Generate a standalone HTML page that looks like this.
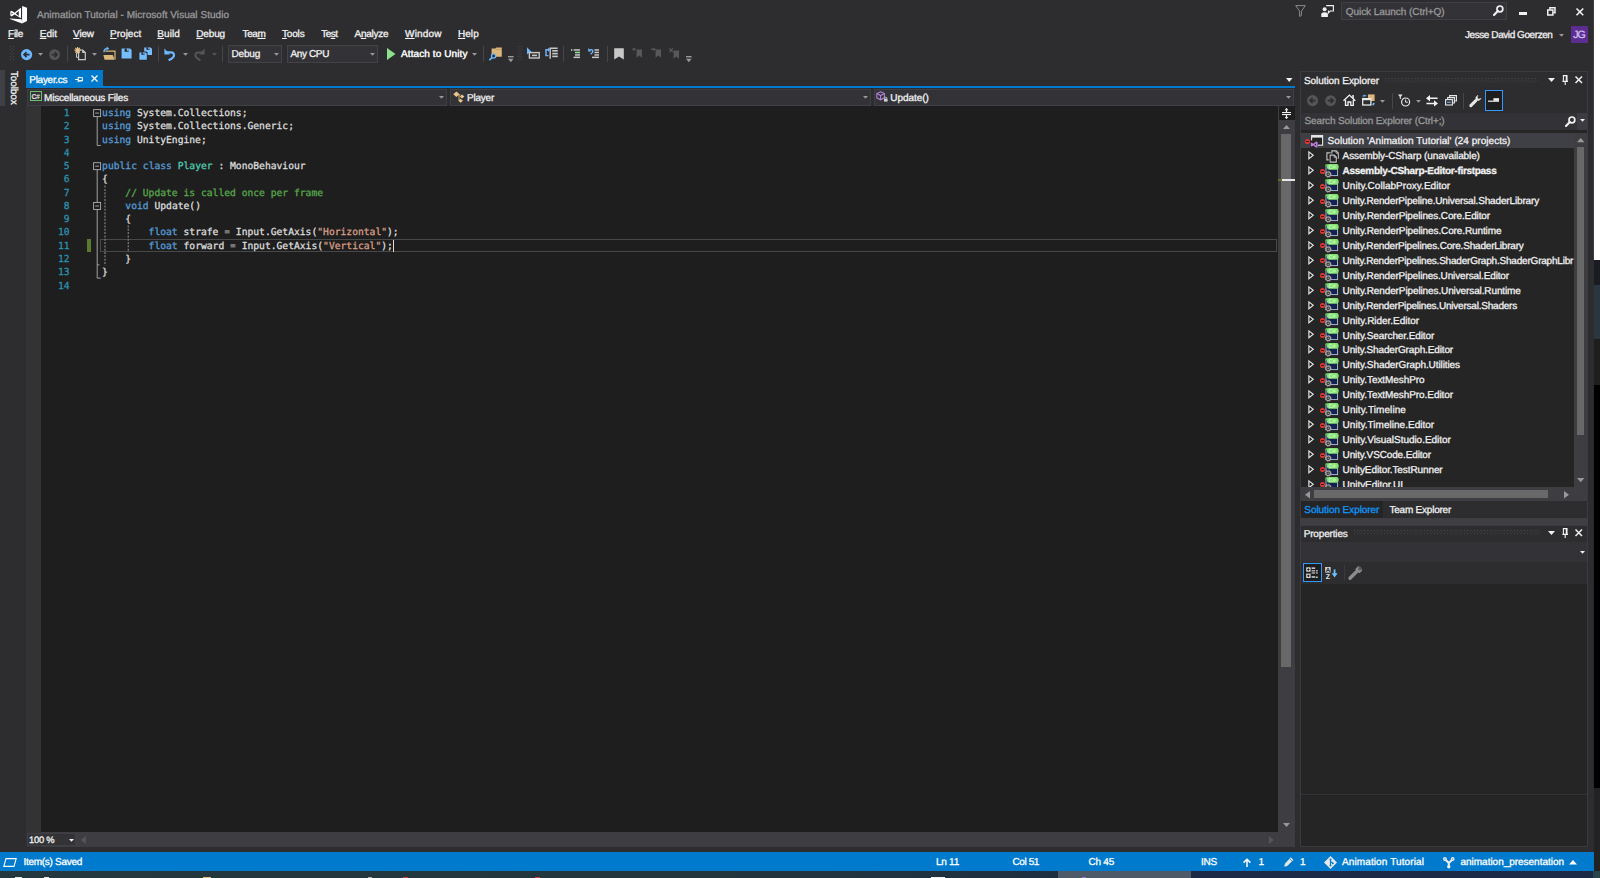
<!DOCTYPE html>
<html lang="en"><head><meta charset="utf-8"><title>Animation Tutorial - Microsoft Visual Studio</title>
<style>
html,body{margin:0;padding:0;background:#2d2d30;overflow:hidden}
body{width:1600px;height:878px;position:relative;font-family:"Liberation Sans",sans-serif;font-size:10px;color:#f1f1f1;text-rendering:geometricPrecision;-webkit-text-stroke:0.3px}
.a{position:absolute}
.t{position:absolute;white-space:pre;line-height:14px}
.c{position:absolute;white-space:pre;font-family:"DejaVu Sans Mono","Liberation Mono",monospace}
svg{position:absolute;overflow:visible}
u{text-decoration:underline;text-underline-offset:1px;text-decoration-thickness:1px}
.o{color:#b4b4b4;-webkit-text-stroke:0}.k{color:#569cd6}.ty{color:#4ec9b0}.s{color:#d69d85}.cm{color:#57a64a}

</style></head>
<body>
<div class="a" style="left:1593px;top:0px;width:7px;height:260px;background:#ffffff;"></div>
<div class="a" style="left:1593px;top:260px;width:7px;height:25px;background:#191c20;"></div>
<div class="a" style="left:1593px;top:285px;width:7px;height:54px;background:#2b3640;"></div>
<div class="a" style="left:1593px;top:339px;width:7px;height:46px;background:#1e1e1e;"></div>
<div class="a" style="left:1593px;top:385px;width:7px;height:402.5px;background:#000000;"></div>
<div class="a" style="left:1593px;top:787.5px;width:7px;height:85px;background:#222222;"></div>
<div class="a" style="left:1592.5px;top:0px;width:1.5px;height:872px;background:linear-gradient(90deg,#2d2d30,#2d2d30 40%,rgba(45,45,48,0.5));"></div>
<div class="a" style="left:0px;top:871.4px;width:1600px;height:6.6px;background:linear-gradient(90deg,#24383f 0%,#23363e 45%,#1f3040 62%,#1c2a47 76%,#1c2a47 100%);"></div>
<div class="a" style="left:1058px;top:871.4px;width:133px;height:6.6px;background:#4e5a68;"></div>
<div class="a" style="left:1593px;top:871.4px;width:7px;height:6.6px;background:#2a454a;"></div>
<div class="a" style="left:15px;top:876.6px;width:7px;height:1.4px;background:#e8e8e8;"></div>
<div class="a" style="left:44px;top:876.6px;width:4.5px;height:1.4px;background:#e8e8e8;"></div>
<div class="a" style="left:203px;top:876.6px;width:8px;height:1.4px;background:#e9c46a;"></div>
<div class="a" style="left:368px;top:876.6px;width:4px;height:1.4px;background:#b0b0b0;"></div>
<div class="a" style="left:403px;top:876.6px;width:5px;height:1.4px;background:#d04040;"></div>
<div class="a" style="left:535px;top:876.6px;width:5px;height:1.4px;background:#d04040;"></div>
<div class="a" style="left:931px;top:876.6px;width:14px;height:1.4px;background:#f0f0f0;"></div>
<div class="a" style="left:1082px;top:876.6px;width:4px;height:1.4px;background:#9a6fd0;"></div>
<svg style="left:10px;top:5.6px" width="17" height="17.5" viewBox="0 0 17 17.5"><path fill="#ffffff" d="M12.1 0.1 L17 1.8 V14.9 L12.1 17.4 Z"/><path fill="#ffffff" d="M-0.1 12.4 L11.7 13.3 L12.1 17.4 L-0.1 12.9 Z"/><path fill="#ffffff" fill-rule="evenodd" d="M0.3 5.6 L1.6 4.8 L4.6 6.7 L10.4 2.1 L11 2.3 V12.2 L4.6 8.5 L1.6 10.4 L0.3 9.6 Z M1.5 6.6 V8.6 L2.9 7.6 Z M8.8 5 L5.7 7.6 L8.8 10.1 Z"/></svg>
<span class="t" style="left:37px;top:9px;color:#999999;letter-spacing:0.035px;">Animation Tutorial - Microsoft Visual Studio</span>
<svg style="left:1295px;top:5px" width="11" height="12" viewBox="0 0 11 12"><path fill="none" stroke="#8a8a8a" stroke-width="1" d="M0.7 0.6 H10.3 L6.4 6.2 V10.5 L4.6 11.4 V6.2 Z"/></svg>
<svg style="left:1320.5px;top:5px" width="13" height="12" viewBox="0 0 13 12"><path fill="none" stroke="#f1f1f1" stroke-width="1.1" d="M5.2 0.6 H12.4 V6 H9.2 L7.4 7.8 V6 H7"/><circle cx="3.6" cy="4.3" r="2" fill="#f1f1f1"/><path fill="#f1f1f1" d="M0.3 12 V9.2 Q0.3 7.2 3.6 7.2 Q6.9 7.2 6.9 9.2 V12 Z"/></svg>
<div class="a" style="left:1341px;top:2px;width:166px;height:17.5px;background:#333337;border:1px solid #3f3f46;box-sizing:border-box;"></div>
<span class="t" style="left:1345.75px;top:6px;color:#999999;letter-spacing:-0.048px;">Quick Launch (Ctrl+Q)</span>
<svg style="left:1493px;top:5px" width="11" height="11" viewBox="0 0 11 11"><circle cx="6.9" cy="3.9" r="2.9" fill="none" stroke="#f1f1f1" stroke-width="1.7"/><path d="M4.8 6.0 L1 9.9" stroke="#f1f1f1" stroke-width="2.2" stroke-linecap="round"/></svg>
<div class="a" style="left:1518.75px;top:12px;width:8.25px;height:2.5px;background:#f1f1f1;"></div>
<svg style="left:1546.75px;top:7px" width="9" height="9" viewBox="0 0 9 9"><path fill="none" stroke="#f1f1f1" stroke-width="1.5" d="M0.75 3.1 H5.9 V8 H0.75 Z"/><path fill="none" stroke="#f1f1f1" stroke-width="1.5" d="M2.9 2.6 V0.75 H8 V5.7 H6.4"/></svg>
<svg style="left:1575.5px;top:8px" width="7.75" height="7.75" viewBox="0 0 7.75 7.75"><path d="M0.5 0.5 L7.25 7.25 M7.25 0.5 L0.5 7.25" stroke="#f1f1f1" stroke-width="1.6" fill="none"/></svg>
<span class="t" style="left:1465px;top:29px;letter-spacing:-0.427px;">Jesse David Goerzen</span>
<svg style="left:1559.25px;top:33.5px" width="5" height="2.8" viewBox="0 0 5 2.8"><path fill="#999999" d="M0 0 H5 L2.5 2.8 Z"/></svg>
<div class="a" style="left:1570.75px;top:25.75px;width:17.25px;height:16.75px;background:#5c2d91;"></div>
<span class="t" style="left:1573.2px;top:28px;font-size:10.5px;color:#d3bff0;letter-spacing:-0.911px;">JG</span>
<span class="t" style="left:8.1px;top:28px;letter-spacing:-0.281px;"><u>F</u>ile</span>
<span class="t" style="left:39.75px;top:28px;letter-spacing:-0.021px;"><u>E</u>dit</span>
<span class="t" style="left:73.1px;top:28px;letter-spacing:-0.216px;"><u>V</u>iew</span>
<span class="t" style="left:110px;top:28px;letter-spacing:0.018px;"><u>P</u>roject</span>
<span class="t" style="left:157.25px;top:28px;letter-spacing:0.100px;"><u>B</u>uild</span>
<span class="t" style="left:196.25px;top:28px;letter-spacing:-0.147px;"><u>D</u>ebug</span>
<span class="t" style="left:242.5px;top:28px;letter-spacing:-0.367px;">Tea<u>m</u></span>
<span class="t" style="left:282px;top:28px;letter-spacing:-0.172px;"><u>T</u>ools</span>
<span class="t" style="left:321.25px;top:28px;letter-spacing:-0.523px;">Te<u>s</u>t</span>
<span class="t" style="left:354.5px;top:28px;letter-spacing:-0.263px;">A<u>n</u>alyze</span>
<span class="t" style="left:405px;top:28px;letter-spacing:0.193px;"><u>W</u>indow</span>
<span class="t" style="left:458px;top:28px;letter-spacing:0.039px;"><u>H</u>elp</span>
<svg style="left:10px;top:46px" width="4.3" height="16" viewBox="0 0 4.3 16"><path fill="#4a4a4f" d="M0 0.00h1v1h-1z M3.3 0.00h1v1h-1z M1.65 1.67h1v1h-1z M0 3.34h1v1h-1z M3.3 3.34h1v1h-1z M1.65 5.01h1v1h-1z M0 6.68h1v1h-1z M3.3 6.68h1v1h-1z M1.65 8.35h1v1h-1z M0 10.02h1v1h-1z M3.3 10.02h1v1h-1z M1.65 11.69h1v1h-1z M0 13.36h1v1h-1z M3.3 13.36h1v1h-1z"/></svg>
<svg style="left:21px;top:48.5px" width="11.2" height="11.2" viewBox="0 0 11.2 11.2"><circle cx="5.6" cy="5.6" r="5.6" fill="#6cb9ff"/><path d="M8.6 5.6 H3.2 M5.6 3.1 L3 5.6 L5.6 8.1" stroke="#2d2d30" stroke-width="1.6" fill="none"/></svg>
<svg style="left:38px;top:53px" width="5" height="2.8" viewBox="0 0 5 2.8"><path fill="#999999" d="M0 0 H5 L2.5 2.8 Z"/></svg>
<svg style="left:49px;top:48.5px" width="11.2" height="11.2" viewBox="0 0 11.2 11.2"><circle cx="5.6" cy="5.6" r="5.4" fill="#555558"/><path d="M2.6 5.6 H8 M5.6 3.1 L8.2 5.6 L5.6 8.1" stroke="#2d2d30" stroke-width="1.6" fill="none"/></svg>
<div class="a" style="left:66.6px;top:46px;width:1px;height:15.5px;background:#46464a;"></div>
<svg style="left:74px;top:47px" width="12" height="13" viewBox="0 0 12 13"><path fill="none" stroke="#c8c8c8" stroke-width="1.2" d="M4.6 3 H8.6 L11.3 5.6 V12.6 H4.6 Z"/><path fill="#c8c8c8" d="M8.2 2.6 L11.6 6 H8.2 Z"/><path fill="none" stroke="#c8c8c8" stroke-width="1" d="M2.5 5.5 V10.3 H4.4"/><path stroke="#e8c48a" stroke-width="1.2" d="M3.6 0 V6.4 M0.4 3.2 H6.8 M1.3 0.9 L5.9 5.5 M5.9 0.9 L1.3 5.5"/></svg>
<svg style="left:92px;top:53px" width="5" height="2.8" viewBox="0 0 5 2.8"><path fill="#999999" d="M0 0 H5 L2.5 2.8 Z"/></svg>
<svg style="left:102.5px;top:47px" width="13" height="13" viewBox="0 0 13 13"><path fill="#dcb67a" d="M2.2 3.4 H12.6 V12.6 H11.4 V4.8 H2.2 Z"/><path fill="#dcb67a" d="M0.4 8 H9.8 L11.6 12.8 H1.6 Z"/><path fill="none" stroke="#6cb9ff" stroke-width="1.4" d="M1 5.3 Q0.8 1.6 4.2 1.6"/><path fill="#6cb9ff" d="M3.6 -0.4 L6.2 1.6 L3.6 3.6 Z"/></svg>
<svg style="left:121.3px;top:48px" width="11.2" height="11.2" viewBox="0 0 11.2 11.2"><path fill="#75beff" d="M0.6 0.6 H9.2 L10.6 2 V10.6 H0.6 Z"/><rect x="3.6" y="0.6" width="4" height="3.2" fill="#2d2d30"/><rect x="5.9" y="0.6" width="1.7" height="2.2" fill="#75beff"/></svg>
<svg style="left:138.5px;top:47px" width="13.4" height="13.4" viewBox="0 0 13.4 13.4"><path fill="#75beff" d="M5.2 0.4 H11.6 L13 1.8 V8 H5.2 Z"/><rect x="7.4" y="0.4" width="3.2" height="2.4" fill="#2d2d30"/><rect x="9.2" y="0.4" width="1.4" height="1.6" fill="#75beff"/><path fill="#2d2d30" d="M-0.4 4.6 H7.6 L8.6 5.6 V13.6 H-0.4 Z"/><path fill="#75beff" d="M0.4 5.4 H6.6 L7.8 6.6 V12.8 H0.4 Z"/><rect x="2.4" y="5.4" width="3.2" height="2.4" fill="#2d2d30"/><rect x="4.2" y="5.4" width="1.4" height="1.6" fill="#75beff"/></svg>
<div class="a" style="left:157.9px;top:46px;width:1px;height:15.5px;background:#46464a;"></div>
<svg style="left:164px;top:47.5px" width="11.5" height="13" viewBox="0 0 11.5 13"><path fill="none" stroke="#6cb9ff" stroke-width="2.2" d="M2.4 4.4 H7 Q10.2 4.6 10 7.4 Q9.8 9.8 4.6 12.3"/><path fill="#6cb9ff" d="M0.4 0.6 V6.6 H6 Z"/></svg>
<svg style="left:183px;top:53px" width="5" height="2.8" viewBox="0 0 5 2.8"><path fill="#999999" d="M0 0 H5 L2.5 2.8 Z"/></svg>
<svg style="left:194px;top:47.5px" width="11.5" height="13" viewBox="0 0 11.5 13"><path fill="none" stroke="#555558" stroke-width="2" d="M8.6 4.4 H4.4 Q1.2 4.6 1.4 7.4 Q1.6 9.8 6.4 12.3"/><path fill="#555558" d="M10.6 0.6 V6.6 H5 Z"/></svg>
<svg style="left:212px;top:53px" width="5" height="2.8" viewBox="0 0 5 2.8"><path fill="#555558" d="M0 0 H5 L2.5 2.8 Z"/></svg>
<div class="a" style="left:222.1px;top:46px;width:1px;height:15.5px;background:#46464a;"></div>
<div class="a" style="left:228px;top:45px;width:54px;height:18px;background:#333337;border:1px solid #434346;box-sizing:border-box;"></div>
<span class="t" style="left:231.5px;top:48px;letter-spacing:-0.194px;">Debug</span>
<svg style="left:273.5px;top:53px" width="5" height="2.8" viewBox="0 0 5 2.8"><path fill="#999999" d="M0 0 H5 L2.5 2.8 Z"/></svg>
<div class="a" style="left:287px;top:45px;width:91px;height:18px;background:#333337;border:1px solid #434346;box-sizing:border-box;"></div>
<span class="t" style="left:290.5px;top:48px;letter-spacing:-0.375px;">Any CPU</span>
<svg style="left:370px;top:53px" width="5" height="2.8" viewBox="0 0 5 2.8"><path fill="#999999" d="M0 0 H5 L2.5 2.8 Z"/></svg>
<svg style="left:386.5px;top:48px" width="8.5" height="12" viewBox="0 0 8.5 12"><path fill="#8ae28a" d="M0 0 L8.5 6.0 L0 12 Z"/></svg>
<span class="t" style="left:401px;top:48px;letter-spacing:0.098px;text-shadow:0 0 0.4px #f1f1f1;">Attach to Unity</span>
<svg style="left:472px;top:53px" width="5" height="2.8" viewBox="0 0 5 2.8"><path fill="#999999" d="M0 0 H5 L2.5 2.8 Z"/></svg>
<div class="a" style="left:482.9px;top:46px;width:1px;height:15.5px;background:#46464a;"></div>
<svg style="left:489px;top:47px" width="13" height="13.5" viewBox="0 0 13 13.5"><path fill="#dcb67a" d="M2.6 1.6 H6.4 L7.4 0.6 H12.8 V9.8 H2.6 Z"/><path fill="#2d2d30" d="M7 2.4 H12.8 V3.1 H6.4 Z" opacity="0.35"/><circle cx="4.6" cy="9" r="2.1" fill="#2d2d30" stroke="#6cb9ff" stroke-width="1.3"/><path d="M3 10.7 L0.4 13.2" stroke="#6cb9ff" stroke-width="1.7"/></svg>
<svg style="left:507.8px;top:55.7px" width="5.6" height="6.4" viewBox="0 0 5.6 6.4"><rect x="0" y="0" width="5.6" height="1.4" fill="#999999"/><path fill="#999999" d="M0 2.7 H5.6 L2.8 6.3 Z"/></svg>
<svg style="left:518px;top:46px" width="4.3" height="16" viewBox="0 0 4.3 16"><path fill="#4a4a4f" d="M0 0.00h1v1h-1z M3.3 0.00h1v1h-1z M1.65 1.67h1v1h-1z M0 3.34h1v1h-1z M3.3 3.34h1v1h-1z M1.65 5.01h1v1h-1z M0 6.68h1v1h-1z M3.3 6.68h1v1h-1z M1.65 8.35h1v1h-1z M0 10.02h1v1h-1z M3.3 10.02h1v1h-1z M1.65 11.69h1v1h-1z M0 13.36h1v1h-1z M3.3 13.36h1v1h-1z"/></svg>
<svg style="left:526.6px;top:47.4px" width="13" height="12" viewBox="0 0 13 12"><path fill="#6cb9ff" d="M0 0.2 L5.2 5.4 H2.4 L0 7.4 Z"/><rect x="2.4" y="5.6" width="9.8" height="5.4" fill="none" stroke="#c8c8c8" stroke-width="1.4"/><rect x="5" y="7.6" width="5" height="1.6" fill="#c8c8c8"/></svg>
<svg style="left:545px;top:47px" width="13" height="12.5" viewBox="0 0 13 12.5"><path fill="none" stroke="#c8c8c8" stroke-width="1.4" d="M5.2 11.8 V1.2 H12.6"/><rect x="7.2" y="3" width="5.6" height="1.6" fill="#c8c8c8"/><rect x="7.2" y="5.8" width="5.6" height="1.6" fill="#c8c8c8"/><rect x="7.2" y="8.6" width="5.6" height="1.6" fill="#c8c8c8"/><path fill="none" stroke="#6cb9ff" stroke-width="1.4" d="M3.4 2.8 H1 V8.6 H3.4"/><path fill="#6cb9ff" d="M3 0.8 L5.4 2.8 L3 4.8 Z"/></svg>
<div class="a" style="left:563.1px;top:46px;width:1px;height:15.5px;background:#46464a;"></div>
<svg style="left:571px;top:48px" width="9" height="10.5" viewBox="0 0 9 10.5"><rect x="2.6" y="1.2" width="6.4" height="1.5" fill="#c8c8c8"/><rect x="4" y="3.7" width="5" height="1.6" fill="#8ae28a"/><rect x="4" y="6.2" width="5" height="1.5" fill="#c8c8c8"/><rect x="2.6" y="8.6" width="6.4" height="1.5" fill="#c8c8c8"/><path fill="#c8c8c8" d="M0 0.8 L1.8 2 L0 3.2 Z"/></svg>
<svg style="left:588px;top:48px" width="11" height="10.5" viewBox="0 0 11 10.5"><rect x="6.4" y="1.2" width="4.6" height="1.5" fill="#c8c8c8"/><rect x="6.4" y="3.7" width="4.6" height="1.5" fill="#c8c8c8"/><rect x="6.4" y="6.2" width="4.6" height="1.5" fill="#c8c8c8"/><rect x="4" y="8.6" width="7" height="1.5" fill="#c8c8c8"/><path fill="none" stroke="#6cb9ff" stroke-width="1.3" d="M1.6 1.6 H3.2 Q5 1.8 4.8 3.6 Q4.6 5 2.6 6.2"/><path fill="#6cb9ff" d="M0.2 0 V3.4 H3.4 Z"/></svg>
<div class="a" style="left:606.7px;top:46px;width:1px;height:15.5px;background:#46464a;"></div>
<svg style="left:613.8px;top:47.8px" width="10" height="11.6" viewBox="0 0 10 11.6"><path fill="#c8c8c8" d="M0.2 0.2 H9.8 V11.4 L5 8.4 L0.2 11.4 Z"/></svg>
<svg style="left:632.4px;top:47px" width="10" height="11" viewBox="0 0 10 11"><path fill="#58585c" d="M4.6 2.4 H10 V10.8 L7.3 8.4 L4.6 10.8 Z"/><path fill="none" stroke="#58585c" stroke-width="1.2" d="M4 2.2 H1"/><path fill="#58585c" d="M2.4 0.2 V4.2 L0 2.2 Z"/></svg>
<svg style="left:650.6px;top:47px" width="10" height="11" viewBox="0 0 10 11"><path fill="#58585c" d="M4.6 2.4 H10 V10.8 L7.3 8.4 L4.6 10.8 Z"/><path fill="none" stroke="#58585c" stroke-width="1.2" d="M0 2.2 H3"/><path fill="#58585c" d="M2.4 0.2 V4.2 L4.8 2.2 Z"/></svg>
<svg style="left:668.8px;top:47.6px" width="10" height="11" viewBox="0 0 10 11"><path fill="#58585c" d="M4.6 2.4 H10 V10.8 L7.3 8.4 L4.6 10.8 Z"/><path stroke="#58585c" stroke-width="1.2" d="M0.4 0.4 L4 4 M4 0.4 L0.4 4"/></svg>
<svg style="left:686px;top:55.6px" width="5.6" height="6.4" viewBox="0 0 5.6 6.4"><rect x="0" y="0" width="5.6" height="1.4" fill="#999999"/><path fill="#999999" d="M0 2.7 H5.6 L2.8 6.3 Z"/></svg>
<div class="a" style="left:0px;top:70px;width:4.5px;height:35.5px;background:#3f3f46;"></div>
<span class="t" style="left:0px;top:-9px;letter-spacing:-0.138px;left:9.5px;top:71px;transform-origin:0 0;transform:translate(8.7px,0) rotate(90deg);line-height:11px;">Toolbox</span>
<div class="a" style="left:26px;top:70px;width:77px;height:17px;background:#007acc;"></div>
<span class="t" style="left:29.3px;top:74px;color:#ffffff;letter-spacing:-0.286px;">Player.cs</span>
<svg style="left:75px;top:75.5px" width="8" height="7" viewBox="0 0 8 7"><path stroke="#ffffff" stroke-width="1" fill="none" d="M0 3.5 H3.2 M3.2 0.8 V6.2 M3.2 1.6 H7.4 V5 H3.2 M3.2 4.6 H7.4"/></svg>
<svg style="left:91.3px;top:75.2px" width="7" height="7" viewBox="0 0 7 7"><path d="M0.5 0.5 L6.5 6.5 M6.5 0.5 L0.5 6.5" stroke="#ffffff" stroke-width="1.3" fill="none"/></svg>
<div class="a" style="left:26px;top:86px;width:1269px;height:2.2px;background:#007acc;"></div>
<svg style="left:1285.5px;top:78px" width="6.5" height="4" viewBox="0 0 6.5 4"><path fill="#f1f1f1" d="M0 0 H6.5 L3.25 4 Z"/></svg>
<div class="a" style="left:26px;top:88.2px;width:1269px;height:17.4px;background:#2d2d30;"></div>
<div class="a" style="left:27px;top:88.5px;width:419.5px;height:17px;background:#333337;border:1px solid #3f3f46;box-sizing:border-box;"></div>
<div class="a" style="left:450px;top:88.5px;width:420.5px;height:17px;background:#333337;border:1px solid #3f3f46;box-sizing:border-box;"></div>
<div class="a" style="left:873.5px;top:88.5px;width:420.5px;height:17px;background:#333337;border:1px solid #3f3f46;box-sizing:border-box;"></div>
<svg style="left:30px;top:91px" width="12" height="10" viewBox="0 0 12 10"><rect x="0.5" y="0.5" width="11" height="9" fill="none" stroke="#6fbf6f" stroke-width="1"/><text x="1.4" y="7.6" font-family="Liberation Sans, sans-serif" font-size="7" font-weight="bold" fill="#e8e8e8" letter-spacing="-0.4">C#</text></svg>
<span class="t" style="left:44px;top:92px;letter-spacing:-0.172px;">Miscellaneous Files</span>
<svg style="left:439px;top:95.5px" width="5" height="2.8" viewBox="0 0 5 2.8"><path fill="#999999" d="M0 0 H5 L2.5 2.8 Z"/></svg>
<svg style="left:453px;top:90.5px" width="12" height="12" viewBox="0 0 12 12"><path fill="#e8c48a" d="M3.4 0.4 L6.6 3.2 L3.4 6 L0.2 3.2 Z"/><path fill="#e8c48a" d="M9 3.4 L11.4 5.4 L9 7.4 L6.8 5.4 Z"/><path fill="#e8c48a" d="M7.6 7.8 L10 9.8 L7.6 11.8 L5.4 9.8 Z"/><path fill="none" stroke="#e8c48a" stroke-width="0.9" d="M5.6 4 H7.4 M6 4.4 V9.6 H6.6"/></svg>
<span class="t" style="left:467px;top:92px;letter-spacing:-0.227px;">Player</span>
<svg style="left:862.5px;top:95.5px" width="5" height="2.8" viewBox="0 0 5 2.8"><path fill="#999999" d="M0 0 H5 L2.5 2.8 Z"/></svg>
<svg style="left:876px;top:90.5px" width="12" height="11" viewBox="0 0 12 11"><path fill="none" stroke="#b180d7" stroke-width="1.1" d="M4.6 0.8 L8.4 2.6 V6.8 L4.6 8.8 L0.8 6.8 V2.6 Z M0.8 2.6 L4.6 4.6 L8.4 2.6 M4.6 4.6 V8.8"/><rect x="8" y="7.6" width="3.6" height="3" fill="#d0d0d0"/><path fill="none" stroke="#d0d0d0" stroke-width="0.8" d="M8.8 7.6 V6.6 Q9.8 5.6 10.8 6.6 V7.6"/></svg>
<span class="t" style="left:890.3px;top:92px;letter-spacing:-0.051px;">Update()</span>
<svg style="left:1285.5px;top:95.5px" width="5" height="2.8" viewBox="0 0 5 2.8"><path fill="#999999" d="M0 0 H5 L2.5 2.8 Z"/></svg>
<div class="a" style="left:26px;top:105.6px;width:1252px;height:726.4px;background:#1e1e1e;"></div>
<div class="a" style="left:26px;top:105.6px;width:15px;height:726.4px;background:#333333;"></div>
<div class="a" style="left:100.2px;top:239.3px;width:1177.3px;height:13.1px;border:1.6px solid #484848;box-sizing:border-box;"></div>
<div class="a" style="left:86.6px;top:239px;width:4.4px;height:13.4px;background:#5a7a30;"></div>
<span class="t" style="left:63.78px;top:107px;font-size:9.67px;line-height:13px;color:#2b91af;font-family:'DejaVu Sans Mono', 'Liberation Mono', monospace;">1</span>
<span class="t" style="left:102.1px;top:107px;font-size:9.67px;line-height:13px;color:#dcdcdc;font-family:'DejaVu Sans Mono', 'Liberation Mono', monospace;"><span class="k">using</span> System.Collections;</span>
<span class="t" style="left:63.78px;top:120px;font-size:9.67px;line-height:13px;color:#2b91af;font-family:'DejaVu Sans Mono', 'Liberation Mono', monospace;">2</span>
<span class="t" style="left:102.1px;top:120px;font-size:9.67px;line-height:13px;color:#dcdcdc;font-family:'DejaVu Sans Mono', 'Liberation Mono', monospace;"><span class="k">using</span> System.Collections.Generic;</span>
<span class="t" style="left:63.78px;top:134px;font-size:9.67px;line-height:13px;color:#2b91af;font-family:'DejaVu Sans Mono', 'Liberation Mono', monospace;">3</span>
<span class="t" style="left:102.1px;top:134px;font-size:9.67px;line-height:13px;color:#dcdcdc;font-family:'DejaVu Sans Mono', 'Liberation Mono', monospace;"><span class="k">using</span> UnityEngine;</span>
<span class="t" style="left:63.78px;top:147px;font-size:9.67px;line-height:13px;color:#2b91af;font-family:'DejaVu Sans Mono', 'Liberation Mono', monospace;">4</span>
<span class="t" style="left:63.78px;top:160px;font-size:9.67px;line-height:13px;color:#2b91af;font-family:'DejaVu Sans Mono', 'Liberation Mono', monospace;">5</span>
<span class="t" style="left:102.1px;top:160px;font-size:9.67px;line-height:13px;color:#dcdcdc;font-family:'DejaVu Sans Mono', 'Liberation Mono', monospace;"><span class="k">public</span> <span class="k">class</span> <span class="ty">Player</span> : MonoBehaviour</span>
<span class="t" style="left:63.78px;top:173px;font-size:9.67px;line-height:13px;color:#2b91af;font-family:'DejaVu Sans Mono', 'Liberation Mono', monospace;">6</span>
<span class="t" style="left:102.1px;top:173px;font-size:9.67px;line-height:13px;color:#dcdcdc;font-family:'DejaVu Sans Mono', 'Liberation Mono', monospace;">{</span>
<span class="t" style="left:63.78px;top:187px;font-size:9.67px;line-height:13px;color:#2b91af;font-family:'DejaVu Sans Mono', 'Liberation Mono', monospace;">7</span>
<span class="t" style="left:102.1px;top:187px;font-size:9.67px;line-height:13px;color:#dcdcdc;font-family:'DejaVu Sans Mono', 'Liberation Mono', monospace;">    <span class="cm">// Update is called once per frame</span></span>
<span class="t" style="left:63.78px;top:200px;font-size:9.67px;line-height:13px;color:#2b91af;font-family:'DejaVu Sans Mono', 'Liberation Mono', monospace;">8</span>
<span class="t" style="left:102.1px;top:200px;font-size:9.67px;line-height:13px;color:#dcdcdc;font-family:'DejaVu Sans Mono', 'Liberation Mono', monospace;">    <span class="k">void</span> Update()</span>
<span class="t" style="left:63.78px;top:213px;font-size:9.67px;line-height:13px;color:#2b91af;font-family:'DejaVu Sans Mono', 'Liberation Mono', monospace;">9</span>
<span class="t" style="left:102.1px;top:213px;font-size:9.67px;line-height:13px;color:#dcdcdc;font-family:'DejaVu Sans Mono', 'Liberation Mono', monospace;">    {</span>
<span class="t" style="left:57.96px;top:226px;font-size:9.67px;line-height:13px;color:#2b91af;font-family:'DejaVu Sans Mono', 'Liberation Mono', monospace;">10</span>
<span class="t" style="left:102.1px;top:226px;font-size:9.67px;line-height:13px;color:#dcdcdc;font-family:'DejaVu Sans Mono', 'Liberation Mono', monospace;">        <span class="k">float</span> strafe <span class="o">=</span> Input.GetAxis(<span class="s">"Horizontal"</span>);</span>
<span class="t" style="left:57.96px;top:240px;font-size:9.67px;line-height:13px;color:#2b91af;font-family:'DejaVu Sans Mono', 'Liberation Mono', monospace;">11</span>
<span class="t" style="left:102.1px;top:240px;font-size:9.67px;line-height:13px;color:#dcdcdc;font-family:'DejaVu Sans Mono', 'Liberation Mono', monospace;">        <span class="k">float</span> forward <span class="o">=</span> Input.GetAxis(<span class="s">"Vertical"</span>);</span>
<span class="t" style="left:57.96px;top:253px;font-size:9.67px;line-height:13px;color:#2b91af;font-family:'DejaVu Sans Mono', 'Liberation Mono', monospace;">12</span>
<span class="t" style="left:102.1px;top:253px;font-size:9.67px;line-height:13px;color:#dcdcdc;font-family:'DejaVu Sans Mono', 'Liberation Mono', monospace;">    }</span>
<span class="t" style="left:57.96px;top:266px;font-size:9.67px;line-height:13px;color:#2b91af;font-family:'DejaVu Sans Mono', 'Liberation Mono', monospace;">13</span>
<span class="t" style="left:102.1px;top:266px;font-size:9.67px;line-height:13px;color:#dcdcdc;font-family:'DejaVu Sans Mono', 'Liberation Mono', monospace;">}</span>
<span class="t" style="left:57.96px;top:280px;font-size:9.67px;line-height:13px;color:#2b91af;font-family:'DejaVu Sans Mono', 'Liberation Mono', monospace;">14</span>
<div class="a" style="left:393.2px;top:239.8px;width:1px;height:11.8px;background:#dcdcdc;"></div>
<svg style="left:0;top:0" width="200" height="300" viewBox="0 0 200 300"><path d="M97.2 116.6 V145.44 H100.8" stroke="#b0b0b0" stroke-width="0.9" fill="none"/><rect x="93.6" y="109.6" width="7" height="7" fill="#1e1e1e" stroke="#b0b0b0" stroke-width="0.9"/><path d="M95.19999999999999 113.1 H99.0" stroke="#b0b0b0" stroke-width="0.9"/><path d="M97.2 169.68 V278.14000000000004 H100.8" stroke="#b0b0b0" stroke-width="0.9" fill="none"/><rect x="93.6" y="162.68" width="7" height="7" fill="#1e1e1e" stroke="#b0b0b0" stroke-width="0.9"/><path d="M95.19999999999999 166.18 H99.0" stroke="#b0b0b0" stroke-width="0.9"/><rect x="93.6" y="202.49" width="7" height="7" fill="#1e1e1e" stroke="#b0b0b0" stroke-width="0.9"/><path d="M95.19999999999999 205.99 H99.0" stroke="#b0b0b0" stroke-width="0.9"/><path d="M97.2 264.87 H99.4" stroke="#b0b0b0" stroke-width="0.9" fill="none"/><path d="M105 185.62 V265.44000000000005" stroke="#727272" stroke-width="1.4" stroke-dasharray="2 1.32" fill="none"/><path d="M128.3 225.42999999999998 V252.17" stroke="#727272" stroke-width="1.4" stroke-dasharray="2 1.32" fill="none"/></svg>
<div class="a" style="left:1278px;top:105.6px;width:16.6px;height:726.4px;background:#3e3e42;"></div>
<div class="a" style="left:1279px;top:105.6px;width:15.6px;height:14.4px;background:#1e1e1e;"></div>
<svg style="left:1282px;top:107.5px" width="9" height="11.2" viewBox="0 0 9 11.2"><rect x="0" y="4" width="9" height="1.1" fill="#f1f1f1"/><rect x="0" y="6" width="9" height="1.1" fill="#f1f1f1"/><path d="M4.5 0.6 V4 M4.5 7 V10.4" stroke="#f1f1f1" stroke-width="1.2"/><path fill="#f1f1f1" d="M2.6 2.2 L4.5 0 L6.4 2.2 Z M2.6 8.9 L4.5 11.1 L6.4 8.9 Z"/></svg>
<svg style="left:1282.8px;top:124.5px" width="7" height="4" viewBox="0 0 7 4"><path fill="#999999" d="M0 4 H7 L3.5 0 Z"/></svg>
<div class="a" style="left:1281.3px;top:134.4px;width:9.7px;height:532.5px;background:#686868;"></div>
<div class="a" style="left:1278px;top:179.3px;width:16.6px;height:1.4px;background:#e8e8e8;"></div>
<div class="a" style="left:1278px;top:179.3px;width:4px;height:1.4px;background:#577430;"></div>
<svg style="left:1282.8px;top:823px" width="7" height="4" viewBox="0 0 7 4"><path fill="#999999" d="M0 0 H7 L3.5 4 Z"/></svg>
<div class="a" style="left:26px;top:832px;width:1268.6px;height:14.5px;background:#3e3e42;"></div>
<div class="a" style="left:26px;top:832px;width:15px;height:14.5px;background:#333337;"></div>
<div class="a" style="left:27px;top:832.5px;width:48.5px;height:13.5px;background:#333337;border:1px solid #3f3f46;box-sizing:border-box;"></div>
<span class="t" style="left:29px;top:833px;font-size:9.3px;letter-spacing:-0.195px;">100 %</span>
<svg style="left:69px;top:838.5px" width="5" height="2.8" viewBox="0 0 5 2.8"><path fill="#f1f1f1" d="M0 0 H5 L2.5 2.8 Z"/></svg>
<svg style="left:81.3px;top:835.6px" width="4.8" height="8" viewBox="0 0 4.8 8"><path fill="#55555a" d="M4.8 0 V8 L0 4.0 Z"/></svg>
<svg style="left:1268.6px;top:835.6px" width="4.8" height="8" viewBox="0 0 4.8 8"><path fill="#55555a" d="M0 0 V8 L4.8 4.0 Z"/></svg>
<div class="a" style="left:1299.6px;top:70.5px;width:288.8000000000002px;height:448px;background:#2d2d30;border:1px solid #3a3a3f;box-sizing:border-box;"></div>
<span class="t" style="left:1304px;top:75px;letter-spacing:-0.068px;">Solution Explorer</span>
<svg style="left:1385px;top:77.5px" width="156" height="5" viewBox="0 0 156 5"><path fill="#515156" d="M0.00 0h.9v.9h-.9z M1.67 1.7h.9v.9h-.9z M0.00 3.4h.9v.9h-.9z M3.33 0h.9v.9h-.9z M5.00 1.7h.9v.9h-.9z M3.33 3.4h.9v.9h-.9z M6.66 0h.9v.9h-.9z M8.33 1.7h.9v.9h-.9z M6.66 3.4h.9v.9h-.9z M9.99 0h.9v.9h-.9z M11.66 1.7h.9v.9h-.9z M9.99 3.4h.9v.9h-.9z M13.32 0h.9v.9h-.9z M14.99 1.7h.9v.9h-.9z M13.32 3.4h.9v.9h-.9z M16.65 0h.9v.9h-.9z M18.32 1.7h.9v.9h-.9z M16.65 3.4h.9v.9h-.9z M19.98 0h.9v.9h-.9z M21.65 1.7h.9v.9h-.9z M19.98 3.4h.9v.9h-.9z M23.31 0h.9v.9h-.9z M24.98 1.7h.9v.9h-.9z M23.31 3.4h.9v.9h-.9z M26.64 0h.9v.9h-.9z M28.31 1.7h.9v.9h-.9z M26.64 3.4h.9v.9h-.9z M29.97 0h.9v.9h-.9z M31.64 1.7h.9v.9h-.9z M29.97 3.4h.9v.9h-.9z M33.30 0h.9v.9h-.9z M34.97 1.7h.9v.9h-.9z M33.30 3.4h.9v.9h-.9z M36.63 0h.9v.9h-.9z M38.30 1.7h.9v.9h-.9z M36.63 3.4h.9v.9h-.9z M39.96 0h.9v.9h-.9z M41.63 1.7h.9v.9h-.9z M39.96 3.4h.9v.9h-.9z M43.29 0h.9v.9h-.9z M44.96 1.7h.9v.9h-.9z M43.29 3.4h.9v.9h-.9z M46.62 0h.9v.9h-.9z M48.29 1.7h.9v.9h-.9z M46.62 3.4h.9v.9h-.9z M49.95 0h.9v.9h-.9z M51.62 1.7h.9v.9h-.9z M49.95 3.4h.9v.9h-.9z M53.28 0h.9v.9h-.9z M54.95 1.7h.9v.9h-.9z M53.28 3.4h.9v.9h-.9z M56.61 0h.9v.9h-.9z M58.28 1.7h.9v.9h-.9z M56.61 3.4h.9v.9h-.9z M59.94 0h.9v.9h-.9z M61.61 1.7h.9v.9h-.9z M59.94 3.4h.9v.9h-.9z M63.27 0h.9v.9h-.9z M64.94 1.7h.9v.9h-.9z M63.27 3.4h.9v.9h-.9z M66.60 0h.9v.9h-.9z M68.27 1.7h.9v.9h-.9z M66.60 3.4h.9v.9h-.9z M69.93 0h.9v.9h-.9z M71.60 1.7h.9v.9h-.9z M69.93 3.4h.9v.9h-.9z M73.26 0h.9v.9h-.9z M74.93 1.7h.9v.9h-.9z M73.26 3.4h.9v.9h-.9z M76.59 0h.9v.9h-.9z M78.26 1.7h.9v.9h-.9z M76.59 3.4h.9v.9h-.9z M79.92 0h.9v.9h-.9z M81.59 1.7h.9v.9h-.9z M79.92 3.4h.9v.9h-.9z M83.25 0h.9v.9h-.9z M84.92 1.7h.9v.9h-.9z M83.25 3.4h.9v.9h-.9z M86.58 0h.9v.9h-.9z M88.25 1.7h.9v.9h-.9z M86.58 3.4h.9v.9h-.9z M89.91 0h.9v.9h-.9z M91.58 1.7h.9v.9h-.9z M89.91 3.4h.9v.9h-.9z M93.24 0h.9v.9h-.9z M94.91 1.7h.9v.9h-.9z M93.24 3.4h.9v.9h-.9z M96.57 0h.9v.9h-.9z M98.24 1.7h.9v.9h-.9z M96.57 3.4h.9v.9h-.9z M99.90 0h.9v.9h-.9z M101.57 1.7h.9v.9h-.9z M99.90 3.4h.9v.9h-.9z M103.23 0h.9v.9h-.9z M104.90 1.7h.9v.9h-.9z M103.23 3.4h.9v.9h-.9z M106.56 0h.9v.9h-.9z M108.23 1.7h.9v.9h-.9z M106.56 3.4h.9v.9h-.9z M109.89 0h.9v.9h-.9z M111.56 1.7h.9v.9h-.9z M109.89 3.4h.9v.9h-.9z M113.22 0h.9v.9h-.9z M114.89 1.7h.9v.9h-.9z M113.22 3.4h.9v.9h-.9z M116.55 0h.9v.9h-.9z M118.22 1.7h.9v.9h-.9z M116.55 3.4h.9v.9h-.9z M119.88 0h.9v.9h-.9z M121.55 1.7h.9v.9h-.9z M119.88 3.4h.9v.9h-.9z M123.21 0h.9v.9h-.9z M124.88 1.7h.9v.9h-.9z M123.21 3.4h.9v.9h-.9z M126.54 0h.9v.9h-.9z M128.21 1.7h.9v.9h-.9z M126.54 3.4h.9v.9h-.9z M129.87 0h.9v.9h-.9z M131.54 1.7h.9v.9h-.9z M129.87 3.4h.9v.9h-.9z M133.20 0h.9v.9h-.9z M134.87 1.7h.9v.9h-.9z M133.20 3.4h.9v.9h-.9z M136.53 0h.9v.9h-.9z M138.20 1.7h.9v.9h-.9z M136.53 3.4h.9v.9h-.9z M139.86 0h.9v.9h-.9z M141.53 1.7h.9v.9h-.9z M139.86 3.4h.9v.9h-.9z M143.19 0h.9v.9h-.9z M144.86 1.7h.9v.9h-.9z M143.19 3.4h.9v.9h-.9z M146.52 0h.9v.9h-.9z M148.19 1.7h.9v.9h-.9z M146.52 3.4h.9v.9h-.9z M149.85 0h.9v.9h-.9z M151.52 1.7h.9v.9h-.9z M149.85 3.4h.9v.9h-.9z"/></svg>
<svg style="left:1547.5px;top:78px" width="7" height="4" viewBox="0 0 7 4"><path fill="#f1f1f1" d="M0 0 H7 L3.5 4 Z"/></svg>
<svg style="left:1561.5px;top:75px" width="6.5" height="10" viewBox="0 0 6.5 10"><path stroke="#f1f1f1" stroke-width="1.1" fill="none" d="M3.2 10 V6.4 M0.4 6.4 H6 M1.4 6.4 V0.6 H5 V6.4 M4.3 0.6 V6.4"/></svg>
<svg style="left:1574.8px;top:76.3px" width="7.5" height="7.5" viewBox="0 0 7.5 7.5"><path d="M0.5 0.5 L7.0 7.0 M7.0 0.5 L0.5 7.0" stroke="#f1f1f1" stroke-width="1.5" fill="none"/></svg>
<svg style="left:1307.3px;top:94.8px" width="11.2" height="11.2" viewBox="0 0 11.2 11.2"><circle cx="5.6" cy="5.6" r="5.6" fill="#555558"/><path d="M8.6 5.6 H3.2 M5.6 3.1 L3 5.6 L5.6 8.1" stroke="#2d2d30" stroke-width="1.6" fill="none"/></svg>
<svg style="left:1325.1px;top:94.8px" width="11.2" height="11.2" viewBox="0 0 11.2 11.2"><circle cx="5.6" cy="5.6" r="5.4" fill="#555558"/><path d="M2.6 5.6 H8 M5.6 3.1 L8.2 5.6 L5.6 8.1" stroke="#2d2d30" stroke-width="1.6" fill="none"/></svg>
<svg style="left:1343px;top:94px" width="13" height="12" viewBox="0 0 13 12"><path fill="none" stroke="#f1f1f1" stroke-width="1.4" d="M0.5 6.8 L6.4 1.1 L12.3 6.8"/><path fill="none" stroke="#f1f1f1" stroke-width="1.3" d="M2.5 6 V11.4 H5 V8 H7.8 V11.4 H10.3 V6"/><rect x="9.3" y="1" width="1.5" height="3.2" fill="#f1f1f1"/></svg>
<svg style="left:1361.5px;top:94px" width="13" height="12" viewBox="0 0 13 12"><path fill="#dcb67a" d="M6 0.4 H12.6 V7 H6 Z"/><rect x="0.7" y="4.6" width="8.2" height="6.4" fill="#2d2d30" stroke="#e8e8e8" stroke-width="1.3"/><rect x="0.7" y="4.6" width="8.2" height="1.6" fill="#e8e8e8"/><path fill="#6cb9ff" d="M2.4 2.8 V0.2 L0.2 2.2 Z M11 8.4 V12 L13 9.6 Z"/><path fill="none" stroke="#6cb9ff" stroke-width="1.1" d="M1.8 1.8 H4.4 M11.4 10.2 H9.6"/></svg>
<svg style="left:1380.2px;top:99.5px" width="5" height="2.8" viewBox="0 0 5 2.8"><path fill="#999999" d="M0 0 H5 L2.5 2.8 Z"/></svg>
<div class="a" style="left:1391.5px;top:92.5px;width:1px;height:16px;background:#46464a;"></div>
<svg style="left:1398px;top:93.5px" width="12" height="12.5" viewBox="0 0 12 12.5"><circle cx="7.6" cy="8" r="4" fill="none" stroke="#e8e8e8" stroke-width="1.2"/><path fill="none" stroke="#e8e8e8" stroke-width="1" d="M7.6 5.6 V8.2 H9.8"/><path fill="#e8e8e8" d="M0 0.6 H4.6 L2.3 3.4 Z"/><path fill="none" stroke="#e8e8e8" stroke-width="1" d="M2.3 2.6 V5"/></svg>
<svg style="left:1415.5px;top:99.5px" width="5" height="2.8" viewBox="0 0 5 2.8"><path fill="#999999" d="M0 0 H5 L2.5 2.8 Z"/></svg>
<svg style="left:1425.5px;top:94.5px" width="12" height="11.6" viewBox="0 0 12 11.6"><path fill="none" stroke="#f1f1f1" stroke-width="1.5" d="M2.4 3.2 H11.6 M0.4 8.4 H9.6"/><path fill="#f1f1f1" d="M4 0 V6.4 L0 3.2 Z M8 5.2 V11.6 L12 8.4 Z"/></svg>
<svg style="left:1445px;top:95px" width="12" height="10.6" viewBox="0 0 12 10.6"><path fill="none" stroke="#e8e8e8" stroke-width="1.1" d="M4.6 2.2 V0.6 H11.4 V6 H9.8"/><path fill="none" stroke="#e8e8e8" stroke-width="1.1" d="M2.6 4.2 V2.6 H9.4 V8 H7.8"/><rect x="0.6" y="4.6" width="6.8" height="5.4" fill="#2d2d30" stroke="#e8e8e8" stroke-width="1.1"/><path stroke="#6cb9ff" stroke-width="1.1" d="M2.2 7.3 H5.8"/></svg>
<div class="a" style="left:1463px;top:92.5px;width:1px;height:16px;background:#46464a;"></div>
<svg style="left:1469px;top:94.5px" width="12.4" height="12.4" viewBox="0 0 12.4 12.4"><path d="M1.8 10.6 L6.8 5.6" stroke="#e8e8e8" stroke-width="3" stroke-linecap="round"/><path fill="#e8e8e8" d="M8.4 0.2 Q12 0 12.2 3.8 L10 5.8 L7 5.4 L6.4 2.4 L8.4 0.2 Z"/><path fill="#2d2d30" d="M9.8 -0.4 L12.6 -0.4 L12.6 2.4 L10.6 3.8 L8.8 3.6 L8.6 1.8 Z"/></svg>
<div class="a" style="left:1484.5px;top:90.2px;width:18.8px;height:20.6px;background:#1e1e1e;border:1px solid #3399ff;box-sizing:border-box;"></div>
<svg style="left:1488px;top:97px" width="11" height="6" viewBox="0 0 11 6"><rect x="0" y="3.6" width="11" height="1.2" fill="#f1f1f1"/><rect x="5.4" y="1.2" width="5.6" height="2.6" fill="#f1f1f1"/></svg>
<div class="a" style="left:1300.6px;top:113px;width:286.8px;height:16.8px;background:#333337;"></div>
<div class="a" style="left:1577px;top:113px;width:10.4px;height:16.8px;background:#3c3c42;"></div>
<span class="t" style="left:1304.5px;top:115px;color:#999999;letter-spacing:-0.128px;">Search Solution Explorer (Ctrl+;)</span>
<svg style="left:1564.5px;top:115.5px" width="11" height="11" viewBox="0 0 11 11"><circle cx="6.9" cy="3.9" r="2.9" fill="none" stroke="#f1f1f1" stroke-width="1.7"/><path d="M4.8 6.0 L1 9.9" stroke="#f1f1f1" stroke-width="2.2" stroke-linecap="round"/></svg>
<svg style="left:1579.7px;top:119.3px" width="5" height="2.8" viewBox="0 0 5 2.8"><path fill="#f1f1f1" d="M0 0 H5 L2.5 2.8 Z"/></svg>
<div class="a" style="left:1300.6px;top:130.2px;width:286.8px;height:357px;background:#252526;"></div>
<div class="a" style="left:1300.6px;top:132.8px;width:273.2px;height:15.6px;background:#3f3f46;"></div>
<div class="a" style="left:1301px;top:132.7px;width:273px;height:354.5px;overflow:hidden">
<svg style="left:4px;top:6.6px" width="5" height="5" viewBox="0 0 5 5"><circle cx="2.5" cy="2.5" r="2.5" fill="#e8392f"/><rect x="1.1" y="1.95" width="2.8" height="1.1" fill="#3a1010"/></svg>
<svg style="left:9.2px;top:1.9px" width="13.5" height="13.5" viewBox="0 0 13.5 13.5"><rect x="1.6" y="0.6" width="11" height="9.6" fill="#252526" stroke="#e8e8e8" stroke-width="1.1"/><rect x="1.6" y="0.6" width="11" height="2" fill="#e8e8e8"/><path fill="#252526" d="M0 5.4 H8 V13.4 H0 Z"/><path fill="#c27adb" d="M6.2 6.4 L7.6 7 V12.2 L6.2 12.8 L3.2 10.4 L1.6 11.6 L0.8 11.2 V8 L1.6 7.6 L3.2 8.8 Z M6 8.4 L4.4 9.6 L6 10.8 Z"/></svg>
<span class="t" style="left:26.6px;top:2px;letter-spacing:0.041px;">Solution 'Animation Tutorial' (24 projects)</span>
<svg style="left:7.4px;top:18.53px" width="6.2" height="8.6" viewBox="0 0 6.2 8.6"><path fill="#1a1a1a" stroke="#e4e4e4" stroke-width="1.2" d="M0.9 0.9 L5.2 4.3 L0.9 7.7 Z"/></svg>
<svg style="left:24.5px;top:16.83px" width="12.8" height="12.8" viewBox="0 0 12.8 12.8"><path fill="none" stroke="#c4c4c4" stroke-width="1.1" d="M4.6 2.9 H0.9 V9.9 H3.8"/><path fill="#1a1a1a" stroke="#c4c4c4" stroke-width="1.1" d="M5.9 4.8 V0.9 H10.2 L12.3 3 V8.2 H10.4"/><path fill="none" stroke="#c4c4c4" stroke-width="0.8" d="M10 1 V3.2 H12.2"/><path fill="#101010" stroke="#101010" stroke-width="2.6" d="M4.1 5.1 H8.4 L10.3 7 V12.1 H4.1 Z"/><path fill="#202020" stroke="#c4c4c4" stroke-width="1.1" d="M4.1 5.1 H8.4 L10.3 7 V12.1 H4.1 Z"/><path fill="none" stroke="#c4c4c4" stroke-width="0.8" d="M8.1 5.3 V7.3 H10.1"/></svg>
<span class="t" style="left:41.6px;top:17px;letter-spacing:-0.118px;">Assembly-CSharp (unavailable)</span>
<svg style="left:7.4px;top:33.46px" width="6.2" height="8.6" viewBox="0 0 6.2 8.6"><path fill="#1a1a1a" stroke="#e4e4e4" stroke-width="1.2" d="M0.9 0.9 L5.2 4.3 L0.9 7.7 Z"/></svg>
<svg style="left:18.9px;top:36.16px" width="5" height="5" viewBox="0 0 5 5"><circle cx="2.5" cy="2.5" r="2.5" fill="#e8392f"/><rect x="1.1" y="1.95" width="2.8" height="1.1" fill="#3a1010"/></svg>
<svg style="left:24.4px;top:31.26px" width="13.6" height="13.8" viewBox="0 0 13.6 13.8"><rect x="1" y="1.2" width="11.6" height="10.4" fill="#14224f" stroke="#b4c0dc" stroke-width="0.9"/><path fill="#58c848" d="M0.6 0.2 H3.4 L0.6 3 Z"/><rect x="2" y="0" width="11.6" height="5.8" rx="2.2" fill="#84e274"/><text x="3.6" y="4.9" font-family="Liberation Sans, sans-serif" font-size="5.6" font-weight="bold" fill="#c8f8c0" letter-spacing="-0.2">C#</text><circle cx="3.2" cy="10.3" r="2.3" fill="#2a2a2c" stroke="#a8a8a8" stroke-width="1.2"/><circle cx="3.2" cy="10.3" r="3" fill="none" stroke="#a8a8a8" stroke-width="0.9" stroke-dasharray="1.0 1.356"/><circle cx="3.2" cy="10.3" r="0.8" fill="#a8a8a8"/></svg>
<span class="t" style="left:41.6px;top:32px;font-weight:bold;letter-spacing:-0.299px;">Assembly-CSharp-Editor-firstpass</span>
<svg style="left:7.4px;top:48.39px" width="6.2" height="8.6" viewBox="0 0 6.2 8.6"><path fill="#1a1a1a" stroke="#e4e4e4" stroke-width="1.2" d="M0.9 0.9 L5.2 4.3 L0.9 7.7 Z"/></svg>
<svg style="left:18.9px;top:51.09px" width="5" height="5" viewBox="0 0 5 5"><circle cx="2.5" cy="2.5" r="2.5" fill="#e8392f"/><rect x="1.1" y="1.95" width="2.8" height="1.1" fill="#3a1010"/></svg>
<svg style="left:24.4px;top:46.19px" width="13.6" height="13.8" viewBox="0 0 13.6 13.8"><rect x="1" y="1.2" width="11.6" height="10.4" fill="#14224f" stroke="#b4c0dc" stroke-width="0.9"/><path fill="#58c848" d="M0.6 0.2 H3.4 L0.6 3 Z"/><rect x="2" y="0" width="11.6" height="5.8" rx="2.2" fill="#84e274"/><text x="3.6" y="4.9" font-family="Liberation Sans, sans-serif" font-size="5.6" font-weight="bold" fill="#c8f8c0" letter-spacing="-0.2">C#</text><circle cx="3.2" cy="10.3" r="2.3" fill="#2a2a2c" stroke="#a8a8a8" stroke-width="1.2"/><circle cx="3.2" cy="10.3" r="3" fill="none" stroke="#a8a8a8" stroke-width="0.9" stroke-dasharray="1.0 1.356"/><circle cx="3.2" cy="10.3" r="0.8" fill="#a8a8a8"/></svg>
<span class="t" style="left:41.6px;top:47px;letter-spacing:0.030px;">Unity.CollabProxy.Editor</span>
<svg style="left:7.4px;top:63.32px" width="6.2" height="8.6" viewBox="0 0 6.2 8.6"><path fill="#1a1a1a" stroke="#e4e4e4" stroke-width="1.2" d="M0.9 0.9 L5.2 4.3 L0.9 7.7 Z"/></svg>
<svg style="left:18.9px;top:66.02px" width="5" height="5" viewBox="0 0 5 5"><circle cx="2.5" cy="2.5" r="2.5" fill="#e8392f"/><rect x="1.1" y="1.95" width="2.8" height="1.1" fill="#3a1010"/></svg>
<svg style="left:24.4px;top:61.12px" width="13.6" height="13.8" viewBox="0 0 13.6 13.8"><rect x="1" y="1.2" width="11.6" height="10.4" fill="#14224f" stroke="#b4c0dc" stroke-width="0.9"/><path fill="#58c848" d="M0.6 0.2 H3.4 L0.6 3 Z"/><rect x="2" y="0" width="11.6" height="5.8" rx="2.2" fill="#84e274"/><text x="3.6" y="4.9" font-family="Liberation Sans, sans-serif" font-size="5.6" font-weight="bold" fill="#c8f8c0" letter-spacing="-0.2">C#</text><circle cx="3.2" cy="10.3" r="2.3" fill="#2a2a2c" stroke="#a8a8a8" stroke-width="1.2"/><circle cx="3.2" cy="10.3" r="3" fill="none" stroke="#a8a8a8" stroke-width="0.9" stroke-dasharray="1.0 1.356"/><circle cx="3.2" cy="10.3" r="0.8" fill="#a8a8a8"/></svg>
<span class="t" style="left:41.6px;top:62px;letter-spacing:-0.156px;">Unity.RenderPipeline.Universal.ShaderLibrary</span>
<svg style="left:7.4px;top:78.25px" width="6.2" height="8.6" viewBox="0 0 6.2 8.6"><path fill="#1a1a1a" stroke="#e4e4e4" stroke-width="1.2" d="M0.9 0.9 L5.2 4.3 L0.9 7.7 Z"/></svg>
<svg style="left:18.9px;top:80.95px" width="5" height="5" viewBox="0 0 5 5"><circle cx="2.5" cy="2.5" r="2.5" fill="#e8392f"/><rect x="1.1" y="1.95" width="2.8" height="1.1" fill="#3a1010"/></svg>
<svg style="left:24.4px;top:76.05px" width="13.6" height="13.8" viewBox="0 0 13.6 13.8"><rect x="1" y="1.2" width="11.6" height="10.4" fill="#14224f" stroke="#b4c0dc" stroke-width="0.9"/><path fill="#58c848" d="M0.6 0.2 H3.4 L0.6 3 Z"/><rect x="2" y="0" width="11.6" height="5.8" rx="2.2" fill="#84e274"/><text x="3.6" y="4.9" font-family="Liberation Sans, sans-serif" font-size="5.6" font-weight="bold" fill="#c8f8c0" letter-spacing="-0.2">C#</text><circle cx="3.2" cy="10.3" r="2.3" fill="#2a2a2c" stroke="#a8a8a8" stroke-width="1.2"/><circle cx="3.2" cy="10.3" r="3" fill="none" stroke="#a8a8a8" stroke-width="0.9" stroke-dasharray="1.0 1.356"/><circle cx="3.2" cy="10.3" r="0.8" fill="#a8a8a8"/></svg>
<span class="t" style="left:41.6px;top:77px;letter-spacing:-0.126px;">Unity.RenderPipelines.Core.Editor</span>
<svg style="left:7.4px;top:93.18px" width="6.2" height="8.6" viewBox="0 0 6.2 8.6"><path fill="#1a1a1a" stroke="#e4e4e4" stroke-width="1.2" d="M0.9 0.9 L5.2 4.3 L0.9 7.7 Z"/></svg>
<svg style="left:18.9px;top:95.88px" width="5" height="5" viewBox="0 0 5 5"><circle cx="2.5" cy="2.5" r="2.5" fill="#e8392f"/><rect x="1.1" y="1.95" width="2.8" height="1.1" fill="#3a1010"/></svg>
<svg style="left:24.4px;top:90.98px" width="13.6" height="13.8" viewBox="0 0 13.6 13.8"><rect x="1" y="1.2" width="11.6" height="10.4" fill="#14224f" stroke="#b4c0dc" stroke-width="0.9"/><path fill="#58c848" d="M0.6 0.2 H3.4 L0.6 3 Z"/><rect x="2" y="0" width="11.6" height="5.8" rx="2.2" fill="#84e274"/><text x="3.6" y="4.9" font-family="Liberation Sans, sans-serif" font-size="5.6" font-weight="bold" fill="#c8f8c0" letter-spacing="-0.2">C#</text><circle cx="3.2" cy="10.3" r="2.3" fill="#2a2a2c" stroke="#a8a8a8" stroke-width="1.2"/><circle cx="3.2" cy="10.3" r="3" fill="none" stroke="#a8a8a8" stroke-width="0.9" stroke-dasharray="1.0 1.356"/><circle cx="3.2" cy="10.3" r="0.8" fill="#a8a8a8"/></svg>
<span class="t" style="left:41.6px;top:92px;letter-spacing:-0.114px;">Unity.RenderPipelines.Core.Runtime</span>
<svg style="left:7.4px;top:108.11px" width="6.2" height="8.6" viewBox="0 0 6.2 8.6"><path fill="#1a1a1a" stroke="#e4e4e4" stroke-width="1.2" d="M0.9 0.9 L5.2 4.3 L0.9 7.7 Z"/></svg>
<svg style="left:18.9px;top:110.81px" width="5" height="5" viewBox="0 0 5 5"><circle cx="2.5" cy="2.5" r="2.5" fill="#e8392f"/><rect x="1.1" y="1.95" width="2.8" height="1.1" fill="#3a1010"/></svg>
<svg style="left:24.4px;top:105.91px" width="13.6" height="13.8" viewBox="0 0 13.6 13.8"><rect x="1" y="1.2" width="11.6" height="10.4" fill="#14224f" stroke="#b4c0dc" stroke-width="0.9"/><path fill="#58c848" d="M0.6 0.2 H3.4 L0.6 3 Z"/><rect x="2" y="0" width="11.6" height="5.8" rx="2.2" fill="#84e274"/><text x="3.6" y="4.9" font-family="Liberation Sans, sans-serif" font-size="5.6" font-weight="bold" fill="#c8f8c0" letter-spacing="-0.2">C#</text><circle cx="3.2" cy="10.3" r="2.3" fill="#2a2a2c" stroke="#a8a8a8" stroke-width="1.2"/><circle cx="3.2" cy="10.3" r="3" fill="none" stroke="#a8a8a8" stroke-width="0.9" stroke-dasharray="1.0 1.356"/><circle cx="3.2" cy="10.3" r="0.8" fill="#a8a8a8"/></svg>
<span class="t" style="left:41.6px;top:107px;letter-spacing:-0.179px;">Unity.RenderPipelines.Core.ShaderLibrary</span>
<svg style="left:7.4px;top:123.04px" width="6.2" height="8.6" viewBox="0 0 6.2 8.6"><path fill="#1a1a1a" stroke="#e4e4e4" stroke-width="1.2" d="M0.9 0.9 L5.2 4.3 L0.9 7.7 Z"/></svg>
<svg style="left:18.9px;top:125.74px" width="5" height="5" viewBox="0 0 5 5"><circle cx="2.5" cy="2.5" r="2.5" fill="#e8392f"/><rect x="1.1" y="1.95" width="2.8" height="1.1" fill="#3a1010"/></svg>
<svg style="left:24.4px;top:120.84px" width="13.6" height="13.8" viewBox="0 0 13.6 13.8"><rect x="1" y="1.2" width="11.6" height="10.4" fill="#14224f" stroke="#b4c0dc" stroke-width="0.9"/><path fill="#58c848" d="M0.6 0.2 H3.4 L0.6 3 Z"/><rect x="2" y="0" width="11.6" height="5.8" rx="2.2" fill="#84e274"/><text x="3.6" y="4.9" font-family="Liberation Sans, sans-serif" font-size="5.6" font-weight="bold" fill="#c8f8c0" letter-spacing="-0.2">C#</text><circle cx="3.2" cy="10.3" r="2.3" fill="#2a2a2c" stroke="#a8a8a8" stroke-width="1.2"/><circle cx="3.2" cy="10.3" r="3" fill="none" stroke="#a8a8a8" stroke-width="0.9" stroke-dasharray="1.0 1.356"/><circle cx="3.2" cy="10.3" r="0.8" fill="#a8a8a8"/></svg>
<span class="t" style="left:41.6px;top:122px;letter-spacing:-0.202px;">Unity.RenderPipelines.ShaderGraph.ShaderGraphLibr</span>
<svg style="left:7.4px;top:137.97px" width="6.2" height="8.6" viewBox="0 0 6.2 8.6"><path fill="#1a1a1a" stroke="#e4e4e4" stroke-width="1.2" d="M0.9 0.9 L5.2 4.3 L0.9 7.7 Z"/></svg>
<svg style="left:18.9px;top:140.67px" width="5" height="5" viewBox="0 0 5 5"><circle cx="2.5" cy="2.5" r="2.5" fill="#e8392f"/><rect x="1.1" y="1.95" width="2.8" height="1.1" fill="#3a1010"/></svg>
<svg style="left:24.4px;top:135.77px" width="13.6" height="13.8" viewBox="0 0 13.6 13.8"><rect x="1" y="1.2" width="11.6" height="10.4" fill="#14224f" stroke="#b4c0dc" stroke-width="0.9"/><path fill="#58c848" d="M0.6 0.2 H3.4 L0.6 3 Z"/><rect x="2" y="0" width="11.6" height="5.8" rx="2.2" fill="#84e274"/><text x="3.6" y="4.9" font-family="Liberation Sans, sans-serif" font-size="5.6" font-weight="bold" fill="#c8f8c0" letter-spacing="-0.2">C#</text><circle cx="3.2" cy="10.3" r="2.3" fill="#2a2a2c" stroke="#a8a8a8" stroke-width="1.2"/><circle cx="3.2" cy="10.3" r="3" fill="none" stroke="#a8a8a8" stroke-width="0.9" stroke-dasharray="1.0 1.356"/><circle cx="3.2" cy="10.3" r="0.8" fill="#a8a8a8"/></svg>
<span class="t" style="left:41.6px;top:137px;letter-spacing:-0.136px;">Unity.RenderPipelines.Universal.Editor</span>
<svg style="left:7.4px;top:152.9px" width="6.2" height="8.6" viewBox="0 0 6.2 8.6"><path fill="#1a1a1a" stroke="#e4e4e4" stroke-width="1.2" d="M0.9 0.9 L5.2 4.3 L0.9 7.7 Z"/></svg>
<svg style="left:18.9px;top:155.6px" width="5" height="5" viewBox="0 0 5 5"><circle cx="2.5" cy="2.5" r="2.5" fill="#e8392f"/><rect x="1.1" y="1.95" width="2.8" height="1.1" fill="#3a1010"/></svg>
<svg style="left:24.4px;top:150.7px" width="13.6" height="13.8" viewBox="0 0 13.6 13.8"><rect x="1" y="1.2" width="11.6" height="10.4" fill="#14224f" stroke="#b4c0dc" stroke-width="0.9"/><path fill="#58c848" d="M0.6 0.2 H3.4 L0.6 3 Z"/><rect x="2" y="0" width="11.6" height="5.8" rx="2.2" fill="#84e274"/><text x="3.6" y="4.9" font-family="Liberation Sans, sans-serif" font-size="5.6" font-weight="bold" fill="#c8f8c0" letter-spacing="-0.2">C#</text><circle cx="3.2" cy="10.3" r="2.3" fill="#2a2a2c" stroke="#a8a8a8" stroke-width="1.2"/><circle cx="3.2" cy="10.3" r="3" fill="none" stroke="#a8a8a8" stroke-width="0.9" stroke-dasharray="1.0 1.356"/><circle cx="3.2" cy="10.3" r="0.8" fill="#a8a8a8"/></svg>
<span class="t" style="left:41.6px;top:152px;letter-spacing:-0.115px;">Unity.RenderPipelines.Universal.Runtime</span>
<svg style="left:7.4px;top:167.83px" width="6.2" height="8.6" viewBox="0 0 6.2 8.6"><path fill="#1a1a1a" stroke="#e4e4e4" stroke-width="1.2" d="M0.9 0.9 L5.2 4.3 L0.9 7.7 Z"/></svg>
<svg style="left:18.9px;top:170.53px" width="5" height="5" viewBox="0 0 5 5"><circle cx="2.5" cy="2.5" r="2.5" fill="#e8392f"/><rect x="1.1" y="1.95" width="2.8" height="1.1" fill="#3a1010"/></svg>
<svg style="left:24.4px;top:165.63px" width="13.6" height="13.8" viewBox="0 0 13.6 13.8"><rect x="1" y="1.2" width="11.6" height="10.4" fill="#14224f" stroke="#b4c0dc" stroke-width="0.9"/><path fill="#58c848" d="M0.6 0.2 H3.4 L0.6 3 Z"/><rect x="2" y="0" width="11.6" height="5.8" rx="2.2" fill="#84e274"/><text x="3.6" y="4.9" font-family="Liberation Sans, sans-serif" font-size="5.6" font-weight="bold" fill="#c8f8c0" letter-spacing="-0.2">C#</text><circle cx="3.2" cy="10.3" r="2.3" fill="#2a2a2c" stroke="#a8a8a8" stroke-width="1.2"/><circle cx="3.2" cy="10.3" r="3" fill="none" stroke="#a8a8a8" stroke-width="0.9" stroke-dasharray="1.0 1.356"/><circle cx="3.2" cy="10.3" r="0.8" fill="#a8a8a8"/></svg>
<span class="t" style="left:41.6px;top:167px;letter-spacing:-0.212px;">Unity.RenderPipelines.Universal.Shaders</span>
<svg style="left:7.4px;top:182.76px" width="6.2" height="8.6" viewBox="0 0 6.2 8.6"><path fill="#1a1a1a" stroke="#e4e4e4" stroke-width="1.2" d="M0.9 0.9 L5.2 4.3 L0.9 7.7 Z"/></svg>
<svg style="left:18.9px;top:185.46px" width="5" height="5" viewBox="0 0 5 5"><circle cx="2.5" cy="2.5" r="2.5" fill="#e8392f"/><rect x="1.1" y="1.95" width="2.8" height="1.1" fill="#3a1010"/></svg>
<svg style="left:24.4px;top:180.56px" width="13.6" height="13.8" viewBox="0 0 13.6 13.8"><rect x="1" y="1.2" width="11.6" height="10.4" fill="#14224f" stroke="#b4c0dc" stroke-width="0.9"/><path fill="#58c848" d="M0.6 0.2 H3.4 L0.6 3 Z"/><rect x="2" y="0" width="11.6" height="5.8" rx="2.2" fill="#84e274"/><text x="3.6" y="4.9" font-family="Liberation Sans, sans-serif" font-size="5.6" font-weight="bold" fill="#c8f8c0" letter-spacing="-0.2">C#</text><circle cx="3.2" cy="10.3" r="2.3" fill="#2a2a2c" stroke="#a8a8a8" stroke-width="1.2"/><circle cx="3.2" cy="10.3" r="3" fill="none" stroke="#a8a8a8" stroke-width="0.9" stroke-dasharray="1.0 1.356"/><circle cx="3.2" cy="10.3" r="0.8" fill="#a8a8a8"/></svg>
<span class="t" style="left:41.6px;top:182px;letter-spacing:-0.038px;">Unity.Rider.Editor</span>
<svg style="left:7.4px;top:197.69px" width="6.2" height="8.6" viewBox="0 0 6.2 8.6"><path fill="#1a1a1a" stroke="#e4e4e4" stroke-width="1.2" d="M0.9 0.9 L5.2 4.3 L0.9 7.7 Z"/></svg>
<svg style="left:18.9px;top:200.39px" width="5" height="5" viewBox="0 0 5 5"><circle cx="2.5" cy="2.5" r="2.5" fill="#e8392f"/><rect x="1.1" y="1.95" width="2.8" height="1.1" fill="#3a1010"/></svg>
<svg style="left:24.4px;top:195.49px" width="13.6" height="13.8" viewBox="0 0 13.6 13.8"><rect x="1" y="1.2" width="11.6" height="10.4" fill="#14224f" stroke="#b4c0dc" stroke-width="0.9"/><path fill="#58c848" d="M0.6 0.2 H3.4 L0.6 3 Z"/><rect x="2" y="0" width="11.6" height="5.8" rx="2.2" fill="#84e274"/><text x="3.6" y="4.9" font-family="Liberation Sans, sans-serif" font-size="5.6" font-weight="bold" fill="#c8f8c0" letter-spacing="-0.2">C#</text><circle cx="3.2" cy="10.3" r="2.3" fill="#2a2a2c" stroke="#a8a8a8" stroke-width="1.2"/><circle cx="3.2" cy="10.3" r="3" fill="none" stroke="#a8a8a8" stroke-width="0.9" stroke-dasharray="1.0 1.356"/><circle cx="3.2" cy="10.3" r="0.8" fill="#a8a8a8"/></svg>
<span class="t" style="left:41.6px;top:197px;letter-spacing:-0.102px;">Unity.Searcher.Editor</span>
<svg style="left:7.4px;top:212.62px" width="6.2" height="8.6" viewBox="0 0 6.2 8.6"><path fill="#1a1a1a" stroke="#e4e4e4" stroke-width="1.2" d="M0.9 0.9 L5.2 4.3 L0.9 7.7 Z"/></svg>
<svg style="left:18.9px;top:215.32px" width="5" height="5" viewBox="0 0 5 5"><circle cx="2.5" cy="2.5" r="2.5" fill="#e8392f"/><rect x="1.1" y="1.95" width="2.8" height="1.1" fill="#3a1010"/></svg>
<svg style="left:24.4px;top:210.42px" width="13.6" height="13.8" viewBox="0 0 13.6 13.8"><rect x="1" y="1.2" width="11.6" height="10.4" fill="#14224f" stroke="#b4c0dc" stroke-width="0.9"/><path fill="#58c848" d="M0.6 0.2 H3.4 L0.6 3 Z"/><rect x="2" y="0" width="11.6" height="5.8" rx="2.2" fill="#84e274"/><text x="3.6" y="4.9" font-family="Liberation Sans, sans-serif" font-size="5.6" font-weight="bold" fill="#c8f8c0" letter-spacing="-0.2">C#</text><circle cx="3.2" cy="10.3" r="2.3" fill="#2a2a2c" stroke="#a8a8a8" stroke-width="1.2"/><circle cx="3.2" cy="10.3" r="3" fill="none" stroke="#a8a8a8" stroke-width="0.9" stroke-dasharray="1.0 1.356"/><circle cx="3.2" cy="10.3" r="0.8" fill="#a8a8a8"/></svg>
<span class="t" style="left:41.6px;top:211px;letter-spacing:-0.140px;">Unity.ShaderGraph.Editor</span>
<svg style="left:7.4px;top:227.55px" width="6.2" height="8.6" viewBox="0 0 6.2 8.6"><path fill="#1a1a1a" stroke="#e4e4e4" stroke-width="1.2" d="M0.9 0.9 L5.2 4.3 L0.9 7.7 Z"/></svg>
<svg style="left:18.9px;top:230.25px" width="5" height="5" viewBox="0 0 5 5"><circle cx="2.5" cy="2.5" r="2.5" fill="#e8392f"/><rect x="1.1" y="1.95" width="2.8" height="1.1" fill="#3a1010"/></svg>
<svg style="left:24.4px;top:225.35px" width="13.6" height="13.8" viewBox="0 0 13.6 13.8"><rect x="1" y="1.2" width="11.6" height="10.4" fill="#14224f" stroke="#b4c0dc" stroke-width="0.9"/><path fill="#58c848" d="M0.6 0.2 H3.4 L0.6 3 Z"/><rect x="2" y="0" width="11.6" height="5.8" rx="2.2" fill="#84e274"/><text x="3.6" y="4.9" font-family="Liberation Sans, sans-serif" font-size="5.6" font-weight="bold" fill="#c8f8c0" letter-spacing="-0.2">C#</text><circle cx="3.2" cy="10.3" r="2.3" fill="#2a2a2c" stroke="#a8a8a8" stroke-width="1.2"/><circle cx="3.2" cy="10.3" r="3" fill="none" stroke="#a8a8a8" stroke-width="0.9" stroke-dasharray="1.0 1.356"/><circle cx="3.2" cy="10.3" r="0.8" fill="#a8a8a8"/></svg>
<span class="t" style="left:41.6px;top:226px;letter-spacing:-0.092px;">Unity.ShaderGraph.Utilities</span>
<svg style="left:7.4px;top:242.48px" width="6.2" height="8.6" viewBox="0 0 6.2 8.6"><path fill="#1a1a1a" stroke="#e4e4e4" stroke-width="1.2" d="M0.9 0.9 L5.2 4.3 L0.9 7.7 Z"/></svg>
<svg style="left:18.9px;top:245.18px" width="5" height="5" viewBox="0 0 5 5"><circle cx="2.5" cy="2.5" r="2.5" fill="#e8392f"/><rect x="1.1" y="1.95" width="2.8" height="1.1" fill="#3a1010"/></svg>
<svg style="left:24.4px;top:240.28px" width="13.6" height="13.8" viewBox="0 0 13.6 13.8"><rect x="1" y="1.2" width="11.6" height="10.4" fill="#14224f" stroke="#b4c0dc" stroke-width="0.9"/><path fill="#58c848" d="M0.6 0.2 H3.4 L0.6 3 Z"/><rect x="2" y="0" width="11.6" height="5.8" rx="2.2" fill="#84e274"/><text x="3.6" y="4.9" font-family="Liberation Sans, sans-serif" font-size="5.6" font-weight="bold" fill="#c8f8c0" letter-spacing="-0.2">C#</text><circle cx="3.2" cy="10.3" r="2.3" fill="#2a2a2c" stroke="#a8a8a8" stroke-width="1.2"/><circle cx="3.2" cy="10.3" r="3" fill="none" stroke="#a8a8a8" stroke-width="0.9" stroke-dasharray="1.0 1.356"/><circle cx="3.2" cy="10.3" r="0.8" fill="#a8a8a8"/></svg>
<span class="t" style="left:41.6px;top:241px;letter-spacing:-0.070px;">Unity.TextMeshPro</span>
<svg style="left:7.4px;top:257.41px" width="6.2" height="8.6" viewBox="0 0 6.2 8.6"><path fill="#1a1a1a" stroke="#e4e4e4" stroke-width="1.2" d="M0.9 0.9 L5.2 4.3 L0.9 7.7 Z"/></svg>
<svg style="left:18.9px;top:260.11px" width="5" height="5" viewBox="0 0 5 5"><circle cx="2.5" cy="2.5" r="2.5" fill="#e8392f"/><rect x="1.1" y="1.95" width="2.8" height="1.1" fill="#3a1010"/></svg>
<svg style="left:24.4px;top:255.21px" width="13.6" height="13.8" viewBox="0 0 13.6 13.8"><rect x="1" y="1.2" width="11.6" height="10.4" fill="#14224f" stroke="#b4c0dc" stroke-width="0.9"/><path fill="#58c848" d="M0.6 0.2 H3.4 L0.6 3 Z"/><rect x="2" y="0" width="11.6" height="5.8" rx="2.2" fill="#84e274"/><text x="3.6" y="4.9" font-family="Liberation Sans, sans-serif" font-size="5.6" font-weight="bold" fill="#c8f8c0" letter-spacing="-0.2">C#</text><circle cx="3.2" cy="10.3" r="2.3" fill="#2a2a2c" stroke="#a8a8a8" stroke-width="1.2"/><circle cx="3.2" cy="10.3" r="3" fill="none" stroke="#a8a8a8" stroke-width="0.9" stroke-dasharray="1.0 1.356"/><circle cx="3.2" cy="10.3" r="0.8" fill="#a8a8a8"/></svg>
<span class="t" style="left:41.6px;top:256px;letter-spacing:-0.070px;">Unity.TextMeshPro.Editor</span>
<svg style="left:7.4px;top:272.34px" width="6.2" height="8.6" viewBox="0 0 6.2 8.6"><path fill="#1a1a1a" stroke="#e4e4e4" stroke-width="1.2" d="M0.9 0.9 L5.2 4.3 L0.9 7.7 Z"/></svg>
<svg style="left:18.9px;top:275.04px" width="5" height="5" viewBox="0 0 5 5"><circle cx="2.5" cy="2.5" r="2.5" fill="#e8392f"/><rect x="1.1" y="1.95" width="2.8" height="1.1" fill="#3a1010"/></svg>
<svg style="left:24.4px;top:270.14px" width="13.6" height="13.8" viewBox="0 0 13.6 13.8"><rect x="1" y="1.2" width="11.6" height="10.4" fill="#14224f" stroke="#b4c0dc" stroke-width="0.9"/><path fill="#58c848" d="M0.6 0.2 H3.4 L0.6 3 Z"/><rect x="2" y="0" width="11.6" height="5.8" rx="2.2" fill="#84e274"/><text x="3.6" y="4.9" font-family="Liberation Sans, sans-serif" font-size="5.6" font-weight="bold" fill="#c8f8c0" letter-spacing="-0.2">C#</text><circle cx="3.2" cy="10.3" r="2.3" fill="#2a2a2c" stroke="#a8a8a8" stroke-width="1.2"/><circle cx="3.2" cy="10.3" r="3" fill="none" stroke="#a8a8a8" stroke-width="0.9" stroke-dasharray="1.0 1.356"/><circle cx="3.2" cy="10.3" r="0.8" fill="#a8a8a8"/></svg>
<span class="t" style="left:41.6px;top:271px;letter-spacing:0.082px;">Unity.Timeline</span>
<svg style="left:7.4px;top:287.27px" width="6.2" height="8.6" viewBox="0 0 6.2 8.6"><path fill="#1a1a1a" stroke="#e4e4e4" stroke-width="1.2" d="M0.9 0.9 L5.2 4.3 L0.9 7.7 Z"/></svg>
<svg style="left:18.9px;top:289.97px" width="5" height="5" viewBox="0 0 5 5"><circle cx="2.5" cy="2.5" r="2.5" fill="#e8392f"/><rect x="1.1" y="1.95" width="2.8" height="1.1" fill="#3a1010"/></svg>
<svg style="left:24.4px;top:285.07px" width="13.6" height="13.8" viewBox="0 0 13.6 13.8"><rect x="1" y="1.2" width="11.6" height="10.4" fill="#14224f" stroke="#b4c0dc" stroke-width="0.9"/><path fill="#58c848" d="M0.6 0.2 H3.4 L0.6 3 Z"/><rect x="2" y="0" width="11.6" height="5.8" rx="2.2" fill="#84e274"/><text x="3.6" y="4.9" font-family="Liberation Sans, sans-serif" font-size="5.6" font-weight="bold" fill="#c8f8c0" letter-spacing="-0.2">C#</text><circle cx="3.2" cy="10.3" r="2.3" fill="#2a2a2c" stroke="#a8a8a8" stroke-width="1.2"/><circle cx="3.2" cy="10.3" r="3" fill="none" stroke="#a8a8a8" stroke-width="0.9" stroke-dasharray="1.0 1.356"/><circle cx="3.2" cy="10.3" r="0.8" fill="#a8a8a8"/></svg>
<span class="t" style="left:41.6px;top:286px;letter-spacing:0.022px;">Unity.Timeline.Editor</span>
<svg style="left:7.4px;top:302.2px" width="6.2" height="8.6" viewBox="0 0 6.2 8.6"><path fill="#1a1a1a" stroke="#e4e4e4" stroke-width="1.2" d="M0.9 0.9 L5.2 4.3 L0.9 7.7 Z"/></svg>
<svg style="left:18.9px;top:304.9px" width="5" height="5" viewBox="0 0 5 5"><circle cx="2.5" cy="2.5" r="2.5" fill="#e8392f"/><rect x="1.1" y="1.95" width="2.8" height="1.1" fill="#3a1010"/></svg>
<svg style="left:24.4px;top:300.0px" width="13.6" height="13.8" viewBox="0 0 13.6 13.8"><rect x="1" y="1.2" width="11.6" height="10.4" fill="#14224f" stroke="#b4c0dc" stroke-width="0.9"/><path fill="#58c848" d="M0.6 0.2 H3.4 L0.6 3 Z"/><rect x="2" y="0" width="11.6" height="5.8" rx="2.2" fill="#84e274"/><text x="3.6" y="4.9" font-family="Liberation Sans, sans-serif" font-size="5.6" font-weight="bold" fill="#c8f8c0" letter-spacing="-0.2">C#</text><circle cx="3.2" cy="10.3" r="2.3" fill="#2a2a2c" stroke="#a8a8a8" stroke-width="1.2"/><circle cx="3.2" cy="10.3" r="3" fill="none" stroke="#a8a8a8" stroke-width="0.9" stroke-dasharray="1.0 1.356"/><circle cx="3.2" cy="10.3" r="0.8" fill="#a8a8a8"/></svg>
<span class="t" style="left:41.6px;top:301px;letter-spacing:-0.038px;">Unity.VisualStudio.Editor</span>
<svg style="left:7.4px;top:317.13px" width="6.2" height="8.6" viewBox="0 0 6.2 8.6"><path fill="#1a1a1a" stroke="#e4e4e4" stroke-width="1.2" d="M0.9 0.9 L5.2 4.3 L0.9 7.7 Z"/></svg>
<svg style="left:18.9px;top:319.83px" width="5" height="5" viewBox="0 0 5 5"><circle cx="2.5" cy="2.5" r="2.5" fill="#e8392f"/><rect x="1.1" y="1.95" width="2.8" height="1.1" fill="#3a1010"/></svg>
<svg style="left:24.4px;top:314.93px" width="13.6" height="13.8" viewBox="0 0 13.6 13.8"><rect x="1" y="1.2" width="11.6" height="10.4" fill="#14224f" stroke="#b4c0dc" stroke-width="0.9"/><path fill="#58c848" d="M0.6 0.2 H3.4 L0.6 3 Z"/><rect x="2" y="0" width="11.6" height="5.8" rx="2.2" fill="#84e274"/><text x="3.6" y="4.9" font-family="Liberation Sans, sans-serif" font-size="5.6" font-weight="bold" fill="#c8f8c0" letter-spacing="-0.2">C#</text><circle cx="3.2" cy="10.3" r="2.3" fill="#2a2a2c" stroke="#a8a8a8" stroke-width="1.2"/><circle cx="3.2" cy="10.3" r="3" fill="none" stroke="#a8a8a8" stroke-width="0.9" stroke-dasharray="1.0 1.356"/><circle cx="3.2" cy="10.3" r="0.8" fill="#a8a8a8"/></svg>
<span class="t" style="left:41.6px;top:316px;letter-spacing:-0.135px;">Unity.VSCode.Editor</span>
<svg style="left:7.4px;top:332.06px" width="6.2" height="8.6" viewBox="0 0 6.2 8.6"><path fill="#1a1a1a" stroke="#e4e4e4" stroke-width="1.2" d="M0.9 0.9 L5.2 4.3 L0.9 7.7 Z"/></svg>
<svg style="left:18.9px;top:334.76px" width="5" height="5" viewBox="0 0 5 5"><circle cx="2.5" cy="2.5" r="2.5" fill="#e8392f"/><rect x="1.1" y="1.95" width="2.8" height="1.1" fill="#3a1010"/></svg>
<svg style="left:24.4px;top:329.86px" width="13.6" height="13.8" viewBox="0 0 13.6 13.8"><rect x="1" y="1.2" width="11.6" height="10.4" fill="#14224f" stroke="#b4c0dc" stroke-width="0.9"/><path fill="#58c848" d="M0.6 0.2 H3.4 L0.6 3 Z"/><rect x="2" y="0" width="11.6" height="5.8" rx="2.2" fill="#84e274"/><text x="3.6" y="4.9" font-family="Liberation Sans, sans-serif" font-size="5.6" font-weight="bold" fill="#c8f8c0" letter-spacing="-0.2">C#</text><circle cx="3.2" cy="10.3" r="2.3" fill="#2a2a2c" stroke="#a8a8a8" stroke-width="1.2"/><circle cx="3.2" cy="10.3" r="3" fill="none" stroke="#a8a8a8" stroke-width="0.9" stroke-dasharray="1.0 1.356"/><circle cx="3.2" cy="10.3" r="0.8" fill="#a8a8a8"/></svg>
<span class="t" style="left:41.6px;top:331px;letter-spacing:-0.104px;">UnityEditor.TestRunner</span>
<svg style="left:7.4px;top:346.99px" width="6.2" height="8.6" viewBox="0 0 6.2 8.6"><path fill="#1a1a1a" stroke="#e4e4e4" stroke-width="1.2" d="M0.9 0.9 L5.2 4.3 L0.9 7.7 Z"/></svg>
<svg style="left:18.9px;top:349.69px" width="5" height="5" viewBox="0 0 5 5"><circle cx="2.5" cy="2.5" r="2.5" fill="#e8392f"/><rect x="1.1" y="1.95" width="2.8" height="1.1" fill="#3a1010"/></svg>
<svg style="left:24.4px;top:344.79px" width="13.6" height="13.8" viewBox="0 0 13.6 13.8"><rect x="1" y="1.2" width="11.6" height="10.4" fill="#14224f" stroke="#b4c0dc" stroke-width="0.9"/><path fill="#58c848" d="M0.6 0.2 H3.4 L0.6 3 Z"/><rect x="2" y="0" width="11.6" height="5.8" rx="2.2" fill="#84e274"/><text x="3.6" y="4.9" font-family="Liberation Sans, sans-serif" font-size="5.6" font-weight="bold" fill="#c8f8c0" letter-spacing="-0.2">C#</text><circle cx="3.2" cy="10.3" r="2.3" fill="#2a2a2c" stroke="#a8a8a8" stroke-width="1.2"/><circle cx="3.2" cy="10.3" r="3" fill="none" stroke="#a8a8a8" stroke-width="0.9" stroke-dasharray="1.0 1.356"/><circle cx="3.2" cy="10.3" r="0.8" fill="#a8a8a8"/></svg>
<span class="t" style="left:41.6px;top:346px;letter-spacing:-0.053px;">UnityEditor.UI</span>
</div>
<div class="a" style="left:1573.8px;top:132.8px;width:13.6px;height:354.4px;background:#3e3e42;"></div>
<svg style="left:1577px;top:137.6px" width="7.4" height="4.2" viewBox="0 0 7.4 4.2"><path fill="#999999" d="M0 4.2 H7.4 L3.7 0 Z"/></svg>
<div class="a" style="left:1576.8px;top:146.8px;width:7.6px;height:288.6px;background:#686868;"></div>
<svg style="left:1577px;top:478px" width="7.4" height="4.2" viewBox="0 0 7.4 4.2"><path fill="#999999" d="M0 0 H7.4 L3.7 4.2 Z"/></svg>
<div class="a" style="left:1300.6px;top:487.2px;width:286.8px;height:13.7px;background:#3e3e42;"></div>
<svg style="left:1305px;top:490.5px" width="5" height="7.5" viewBox="0 0 5 7.5"><path fill="#999999" d="M5 0 V7.5 L0 3.75 Z"/></svg>
<div class="a" style="left:1314.2px;top:490.4px;width:234px;height:7.6px;background:#686868;"></div>
<svg style="left:1563.5px;top:490.5px" width="5" height="7.5" viewBox="0 0 5 7.5"><path fill="#999999" d="M0 0 V7.5 L5 3.75 Z"/></svg>
<div class="a" style="left:1300.6px;top:501px;width:82.9px;height:17px;background:#252526;"></div>
<span class="t" style="left:1304.3px;top:504px;color:#0e97fa;letter-spacing:-0.068px;">Solution Explorer</span>
<span class="t" style="left:1389.5px;top:504px;letter-spacing:-0.228px;">Team Explorer</span>
<div class="a" style="left:1299.6px;top:518px;width:288.8px;height:6.6px;background:#3e3e43;"></div>
<div class="a" style="left:1299.6px;top:524.5px;width:288.8000000000002px;height:322px;background:#2d2d30;border:1px solid #3a3a3f;box-sizing:border-box;"></div>
<span class="t" style="left:1303.7px;top:528px;letter-spacing:-0.158px;">Properties</span>
<svg style="left:1354px;top:530px" width="187" height="5" viewBox="0 0 187 5"><path fill="#515156" d="M0.00 0h.9v.9h-.9z M1.67 1.7h.9v.9h-.9z M0.00 3.4h.9v.9h-.9z M3.33 0h.9v.9h-.9z M5.00 1.7h.9v.9h-.9z M3.33 3.4h.9v.9h-.9z M6.66 0h.9v.9h-.9z M8.33 1.7h.9v.9h-.9z M6.66 3.4h.9v.9h-.9z M9.99 0h.9v.9h-.9z M11.66 1.7h.9v.9h-.9z M9.99 3.4h.9v.9h-.9z M13.32 0h.9v.9h-.9z M14.99 1.7h.9v.9h-.9z M13.32 3.4h.9v.9h-.9z M16.65 0h.9v.9h-.9z M18.32 1.7h.9v.9h-.9z M16.65 3.4h.9v.9h-.9z M19.98 0h.9v.9h-.9z M21.65 1.7h.9v.9h-.9z M19.98 3.4h.9v.9h-.9z M23.31 0h.9v.9h-.9z M24.98 1.7h.9v.9h-.9z M23.31 3.4h.9v.9h-.9z M26.64 0h.9v.9h-.9z M28.31 1.7h.9v.9h-.9z M26.64 3.4h.9v.9h-.9z M29.97 0h.9v.9h-.9z M31.64 1.7h.9v.9h-.9z M29.97 3.4h.9v.9h-.9z M33.30 0h.9v.9h-.9z M34.97 1.7h.9v.9h-.9z M33.30 3.4h.9v.9h-.9z M36.63 0h.9v.9h-.9z M38.30 1.7h.9v.9h-.9z M36.63 3.4h.9v.9h-.9z M39.96 0h.9v.9h-.9z M41.63 1.7h.9v.9h-.9z M39.96 3.4h.9v.9h-.9z M43.29 0h.9v.9h-.9z M44.96 1.7h.9v.9h-.9z M43.29 3.4h.9v.9h-.9z M46.62 0h.9v.9h-.9z M48.29 1.7h.9v.9h-.9z M46.62 3.4h.9v.9h-.9z M49.95 0h.9v.9h-.9z M51.62 1.7h.9v.9h-.9z M49.95 3.4h.9v.9h-.9z M53.28 0h.9v.9h-.9z M54.95 1.7h.9v.9h-.9z M53.28 3.4h.9v.9h-.9z M56.61 0h.9v.9h-.9z M58.28 1.7h.9v.9h-.9z M56.61 3.4h.9v.9h-.9z M59.94 0h.9v.9h-.9z M61.61 1.7h.9v.9h-.9z M59.94 3.4h.9v.9h-.9z M63.27 0h.9v.9h-.9z M64.94 1.7h.9v.9h-.9z M63.27 3.4h.9v.9h-.9z M66.60 0h.9v.9h-.9z M68.27 1.7h.9v.9h-.9z M66.60 3.4h.9v.9h-.9z M69.93 0h.9v.9h-.9z M71.60 1.7h.9v.9h-.9z M69.93 3.4h.9v.9h-.9z M73.26 0h.9v.9h-.9z M74.93 1.7h.9v.9h-.9z M73.26 3.4h.9v.9h-.9z M76.59 0h.9v.9h-.9z M78.26 1.7h.9v.9h-.9z M76.59 3.4h.9v.9h-.9z M79.92 0h.9v.9h-.9z M81.59 1.7h.9v.9h-.9z M79.92 3.4h.9v.9h-.9z M83.25 0h.9v.9h-.9z M84.92 1.7h.9v.9h-.9z M83.25 3.4h.9v.9h-.9z M86.58 0h.9v.9h-.9z M88.25 1.7h.9v.9h-.9z M86.58 3.4h.9v.9h-.9z M89.91 0h.9v.9h-.9z M91.58 1.7h.9v.9h-.9z M89.91 3.4h.9v.9h-.9z M93.24 0h.9v.9h-.9z M94.91 1.7h.9v.9h-.9z M93.24 3.4h.9v.9h-.9z M96.57 0h.9v.9h-.9z M98.24 1.7h.9v.9h-.9z M96.57 3.4h.9v.9h-.9z M99.90 0h.9v.9h-.9z M101.57 1.7h.9v.9h-.9z M99.90 3.4h.9v.9h-.9z M103.23 0h.9v.9h-.9z M104.90 1.7h.9v.9h-.9z M103.23 3.4h.9v.9h-.9z M106.56 0h.9v.9h-.9z M108.23 1.7h.9v.9h-.9z M106.56 3.4h.9v.9h-.9z M109.89 0h.9v.9h-.9z M111.56 1.7h.9v.9h-.9z M109.89 3.4h.9v.9h-.9z M113.22 0h.9v.9h-.9z M114.89 1.7h.9v.9h-.9z M113.22 3.4h.9v.9h-.9z M116.55 0h.9v.9h-.9z M118.22 1.7h.9v.9h-.9z M116.55 3.4h.9v.9h-.9z M119.88 0h.9v.9h-.9z M121.55 1.7h.9v.9h-.9z M119.88 3.4h.9v.9h-.9z M123.21 0h.9v.9h-.9z M124.88 1.7h.9v.9h-.9z M123.21 3.4h.9v.9h-.9z M126.54 0h.9v.9h-.9z M128.21 1.7h.9v.9h-.9z M126.54 3.4h.9v.9h-.9z M129.87 0h.9v.9h-.9z M131.54 1.7h.9v.9h-.9z M129.87 3.4h.9v.9h-.9z M133.20 0h.9v.9h-.9z M134.87 1.7h.9v.9h-.9z M133.20 3.4h.9v.9h-.9z M136.53 0h.9v.9h-.9z M138.20 1.7h.9v.9h-.9z M136.53 3.4h.9v.9h-.9z M139.86 0h.9v.9h-.9z M141.53 1.7h.9v.9h-.9z M139.86 3.4h.9v.9h-.9z M143.19 0h.9v.9h-.9z M144.86 1.7h.9v.9h-.9z M143.19 3.4h.9v.9h-.9z M146.52 0h.9v.9h-.9z M148.19 1.7h.9v.9h-.9z M146.52 3.4h.9v.9h-.9z M149.85 0h.9v.9h-.9z M151.52 1.7h.9v.9h-.9z M149.85 3.4h.9v.9h-.9z M153.18 0h.9v.9h-.9z M154.85 1.7h.9v.9h-.9z M153.18 3.4h.9v.9h-.9z M156.51 0h.9v.9h-.9z M158.18 1.7h.9v.9h-.9z M156.51 3.4h.9v.9h-.9z M159.84 0h.9v.9h-.9z M161.51 1.7h.9v.9h-.9z M159.84 3.4h.9v.9h-.9z M163.17 0h.9v.9h-.9z M164.84 1.7h.9v.9h-.9z M163.17 3.4h.9v.9h-.9z M166.50 0h.9v.9h-.9z M168.17 1.7h.9v.9h-.9z M166.50 3.4h.9v.9h-.9z M169.83 0h.9v.9h-.9z M171.50 1.7h.9v.9h-.9z M169.83 3.4h.9v.9h-.9z M173.16 0h.9v.9h-.9z M174.83 1.7h.9v.9h-.9z M173.16 3.4h.9v.9h-.9z M176.49 0h.9v.9h-.9z M178.16 1.7h.9v.9h-.9z M176.49 3.4h.9v.9h-.9z M179.82 0h.9v.9h-.9z M181.49 1.7h.9v.9h-.9z M179.82 3.4h.9v.9h-.9z M183.15 0h.9v.9h-.9z M184.82 1.7h.9v.9h-.9z M183.15 3.4h.9v.9h-.9z"/></svg>
<svg style="left:1547.5px;top:531px" width="7" height="4" viewBox="0 0 7 4"><path fill="#f1f1f1" d="M0 0 H7 L3.5 4 Z"/></svg>
<svg style="left:1561.5px;top:528px" width="6.5" height="10" viewBox="0 0 6.5 10"><path stroke="#f1f1f1" stroke-width="1.1" fill="none" d="M3.2 10 V6.4 M0.4 6.4 H6 M1.4 6.4 V0.6 H5 V6.4 M4.3 0.6 V6.4"/></svg>
<svg style="left:1574.8px;top:529.3px" width="7.5" height="7.5" viewBox="0 0 7.5 7.5"><path d="M0.5 0.5 L7.0 7.0 M7.0 0.5 L0.5 7.0" stroke="#f1f1f1" stroke-width="1.5" fill="none"/></svg>
<div class="a" style="left:1300.6px;top:541.5px;width:286.8px;height:20.5px;background:#333337;"></div>
<svg style="left:1579.5px;top:550.8px" width="5" height="2.8" viewBox="0 0 5 2.8"><path fill="#f1f1f1" d="M0 0 H5 L2.5 2.8 Z"/></svg>
<div class="a" style="left:1300.6px;top:562px;width:286.8px;height:22px;background:#2d2d30;"></div>
<div class="a" style="left:1303px;top:563px;width:19px;height:18.9px;background:#1e1e1e;border:1px solid #3399ff;box-sizing:border-box;"></div>
<svg style="left:1306px;top:567px" width="12" height="12" viewBox="0 0 12 12"><rect x="0.2" y="0.3" width="4.4" height="4.4" fill="#d8d8d8"/><path stroke="#1e1e1e" stroke-width="1" d="M1.2 2.5 H3.6 M2.4 1.3 V3.6999999999999997"/><rect x="0.2" y="6.6" width="4.4" height="4.4" fill="#d8d8d8"/><path stroke="#1e1e1e" stroke-width="1" d="M1.2 8.8 H3.6 M2.4 7.6 V10.0"/><rect x="5.6" y="0.4" width="3.6" height="1.5" fill="#d8d8d8"/><rect x="5.6" y="3" width="3.4" height="1.5" fill="#a8a8a8"/><rect x="9.8" y="3" width="2" height="1.5" fill="#a8a8a8"/><rect x="5.6" y="5.2" width="3.4" height="1.5" fill="#a8a8a8"/><rect x="9.8" y="5.2" width="2" height="1.5" fill="#a8a8a8"/><rect x="5.6" y="9.2" width="3.6" height="1.5" fill="#d8d8d8"/><rect x="9.8" y="9.6" width="2" height="1.3" fill="#d8d8d8"/></svg>
<svg style="left:1325px;top:567px" width="12.6" height="12.6" viewBox="0 0 12.6 12.6"><rect x="0.2" y="0" width="5.4" height="5.6" fill="#d8d8d8"/><text x="0.7" y="5" font-family="Liberation Sans, sans-serif" font-size="6.2" font-weight="bold" fill="#1e1e1e">A</text><text x="0.8" y="12.2" font-family="Liberation Sans, sans-serif" font-size="7" font-weight="bold" fill="#e8e8e8">Z</text><path stroke="#6cc0ff" stroke-width="1.8" d="M9.6 2.4 V8"/><path fill="#6cc0ff" d="M6.6 6.2 H12.6 L9.6 10.6 Z"/></svg>
<div class="a" style="left:1343.5px;top:565px;width:1px;height:15px;background:#3a3a3e;"></div>
<svg style="left:1347.8px;top:565.8px" width="14.4" height="14.2" viewBox="0 0 14.4 14.2"><path d="M2 12.2 L8 6.2" stroke="#8c8c8c" stroke-width="3.4" stroke-linecap="round"/><path fill="#8c8c8c" d="M10 0.2 Q14 0 14.2 4.6 L11.8 7 L8.2 6.4 L7.4 3 L10 0.2 Z"/><path fill="#2d2d30" d="M11.6 -0.4 L14.8 -0.4 L14.8 2.8 L12.4 4.4 L10.4 4.2 L10.2 2.2 Z" opacity="0.55"/></svg>
<div class="a" style="left:1300.6px;top:584px;width:286.8px;height:261.5px;background:#252526;"></div>
<div class="a" style="left:1300.6px;top:794.3px;width:286.8px;height:1px;background:#333337;"></div>
<div class="a" style="left:0px;top:851.7px;width:1593.5px;height:19.7px;background:#007acc;"></div>
<svg style="left:3px;top:858px" width="14" height="9" viewBox="0 0 14 9"><path fill="none" stroke="#ffffff" stroke-width="1.1" d="M3 0.6 H13.2 L11 8.4 H0.8 Z"/></svg>
<span class="t" style="left:23.5px;top:856px;color:#ffffff;letter-spacing:-0.288px;">Item(s) Saved</span>
<span class="t" style="left:936px;top:856px;color:#ffffff;letter-spacing:-0.259px;">Ln 11</span>
<span class="t" style="left:1012.5px;top:856px;color:#ffffff;letter-spacing:-0.401px;">Col 51</span>
<span class="t" style="left:1088.5px;top:856px;color:#ffffff;letter-spacing:-0.237px;">Ch 45</span>
<span class="t" style="left:1201px;top:856px;color:#ffffff;letter-spacing:-0.224px;">INS</span>
<svg style="left:1243px;top:857.5px" width="8" height="9" viewBox="0 0 8 9"><path fill="none" stroke="#ffffff" stroke-width="1.5" d="M4 9 V1.4 M0.6 4.6 L4 1.2 L7.4 4.6"/></svg>
<span class="t" style="left:1258.5px;top:856px;color:#ffffff;">1</span>
<svg style="left:1283.6px;top:857px" width="10" height="10" viewBox="0 0 10 10"><path fill="#e6e6e6" d="M6.8 0.3 L9.4 2.9 L3.2 9.1 L0.2 9.8 L0.9 6.8 Z"/><path stroke="#007acc" stroke-width="0.8" d="M5.6 1.7 L8 4.1"/></svg>
<span class="t" style="left:1300px;top:856px;color:#ffffff;">1</span>
<svg style="left:1324px;top:855.5px" width="13" height="13" viewBox="0 0 13 13"><path fill="#e8e8e8" d="M6.5 0 L13 6.5 L6.5 13 L0 6.5 Z"/><path fill="none" stroke="#007acc" stroke-width="1.1" d="M6.5 3.4 V9.6 M6.5 5.4 L8.6 7.2"/><circle cx="6.5" cy="3.6" r="1" fill="#007acc"/><circle cx="6.5" cy="9.6" r="1" fill="#007acc"/><circle cx="8.8" cy="7.2" r="1" fill="#007acc"/></svg>
<span class="t" style="left:1342px;top:856px;color:#ffffff;letter-spacing:0.109px;">Animation Tutorial</span>
<svg style="left:1443px;top:856.5px" width="11.6" height="11.6" viewBox="0 0 11.6 11.6"><path fill="none" stroke="#ececec" stroke-width="2" d="M2 2.2 L5.8 6 V10.4 M9.8 2.2 L5.8 6"/><circle cx="1.9" cy="2" r="1.9" fill="#ececec"/><circle cx="9.7" cy="2" r="1.9" fill="#ececec"/><circle cx="5.8" cy="9.8" r="1.7" fill="#ececec"/><circle cx="1.9" cy="2" r="0.6" fill="#007acc"/><circle cx="9.7" cy="2" r="0.6" fill="#007acc"/></svg>
<span class="t" style="left:1460.5px;top:856px;color:#ffffff;letter-spacing:-0.021px;">animation_presentation</span>
<svg style="left:1569px;top:860px" width="8" height="4.5" viewBox="0 0 8 4.5"><path fill="#ffffff" d="M0 4.5 H8 L4.0 0 Z"/></svg>
</body></html>
